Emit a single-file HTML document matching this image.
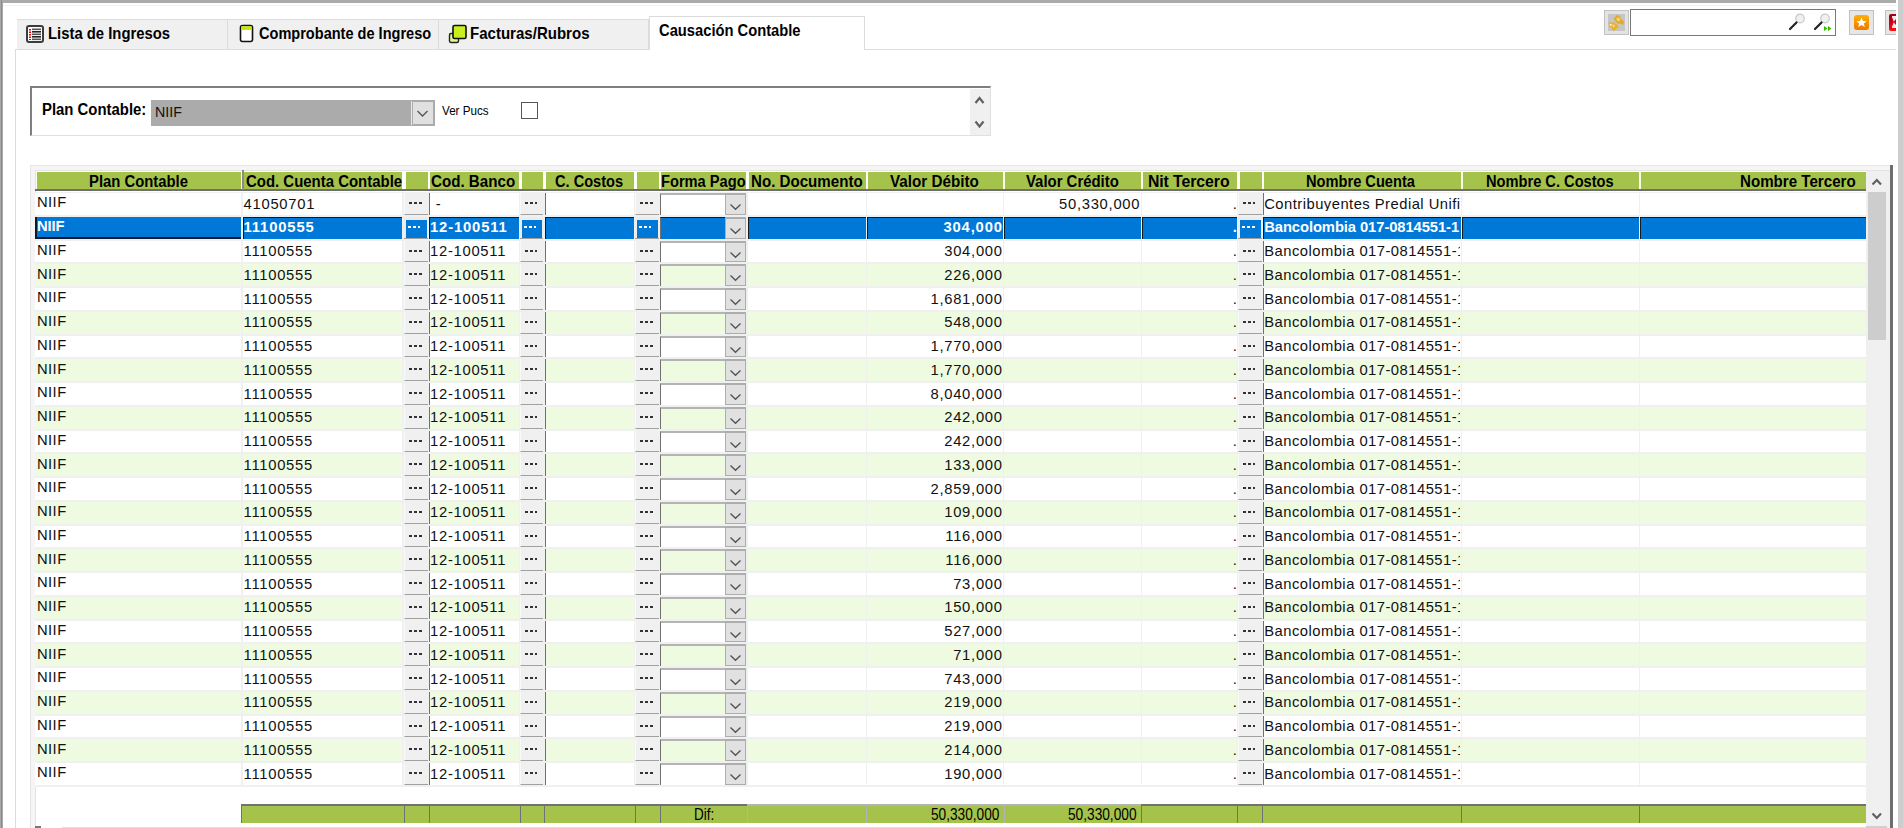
<!DOCTYPE html><html><head><meta charset="utf-8"><style>
html,body{margin:0;padding:0;}
body{width:1903px;height:828px;overflow:hidden;position:relative;background:#fff;font-family:"Liberation Sans", sans-serif;color:#000;}
div{box-sizing:border-box;}
.t{position:absolute;white-space:nowrap;}
.hd{position:absolute;top:172px;height:17px;background:#a5c34b;border-left:1px solid #fafff0;}
.btn{position:absolute;background:#f0f0f0;border-bottom:1px solid #a0a0a0;}
.dots{position:absolute;left:3.7px;top:9px;width:13px;height:2px;background:linear-gradient(90deg,#333 0 2.6px,transparent 2.6px 4.95px,#333 4.95px 7.55px,transparent 7.55px 9.9px,#333 9.9px 12.5px,transparent 12.5px);}
.wd{background:linear-gradient(90deg,#fff 0 2.6px,transparent 2.6px 4.95px,#fff 4.95px 7.55px,transparent 7.55px 9.9px,#fff 9.9px 12.5px,transparent 12.5px);}
</style></head><body>
<div style="position:absolute;left:0px;top:0px;width:1896px;height:3px;background:#ababab;"></div>
<div style="position:absolute;left:0px;top:0px;width:3px;height:828px;background:#a8a8a8;"></div>
<div style="position:absolute;left:1px;top:0px;width:1px;height:828px;background:#8a8a8a;"></div>
<div style="position:absolute;left:1898px;top:0px;width:5px;height:828px;background:#cdcdcd;"></div>
<div style="position:absolute;left:3px;top:5px;width:1893px;height:1px;background:#f3f3f3;"></div>
<div style="position:absolute;left:15px;top:49px;width:1881px;height:1px;background:#dcdcdc;"></div>
<div style="position:absolute;left:15px;top:49px;width:1px;height:779px;background:#dcdcdc;"></div>
<div style="position:absolute;left:17px;top:19px;width:211px;height:30px;background:#f0f0f0;border-top:1px solid #dcdcdc;border-right:1px solid #dcdcdc;"></div>
<div style="position:absolute;left:228px;top:19px;width:211px;height:30px;background:#f0f0f0;border-top:1px solid #dcdcdc;border-right:1px solid #dcdcdc;"></div>
<div style="position:absolute;left:439px;top:19px;width:210px;height:30px;background:#f0f0f0;border-top:1px solid #dcdcdc;border-right:1px solid #dcdcdc;"></div>
<div style="position:absolute;left:649px;top:16px;width:216px;height:34px;background:#fff;border:1px solid #dcdcdc;border-bottom:none;"></div>
<div class="t" style="left:47.56px;top:25.59px;font-size:16.67px;line-height:16.67px;transform:scaleX(0.8908);transform-origin:0 0;font-weight:bold;color:#000;">Lista de Ingresos</div>
<div class="t" style="left:259.42px;top:25.59px;font-size:16.67px;line-height:16.67px;transform:scaleX(0.8732);transform-origin:0 0;font-weight:bold;color:#000;">Comprobante de Ingreso</div>
<div class="t" style="left:469.95px;top:25.59px;font-size:16.67px;line-height:16.67px;transform:scaleX(0.9031);transform-origin:0 0;font-weight:bold;color:#000;">Facturas/Rubros</div>
<div class="t" style="left:658.91px;top:23.31px;font-size:16.52px;line-height:16.52px;transform:scaleX(0.8914);transform-origin:0 0;font-weight:bold;color:#000;">Causación Contable</div>
<svg style="position:absolute;left:26px;top:25px" width="18" height="18" viewBox="0 0 18 18">
<rect x="1" y="1" width="16" height="16" rx="2" fill="#fff" stroke="#3c3c3c" stroke-width="2"/>
<g fill="#e00"><rect x="3" y="4" width="2" height="1.5"/><rect x="3" y="6.5" width="2" height="1.5"/><rect x="3" y="9" width="2" height="1.5"/><rect x="3" y="11.5" width="2" height="1.5"/><rect x="3" y="14" width="2" height="1"/></g>
<g fill="#555"><rect x="6" y="3.5" width="9" height="1.6"/><rect x="6" y="6" width="9" height="1.6" fill="#222"/><rect x="6" y="8.5" width="9" height="1.6"/><rect x="6" y="11" width="9" height="1.6" fill="#222"/><rect x="6" y="13.5" width="9" height="1.6"/></g>
</svg>
<svg style="position:absolute;left:239px;top:24px" width="15" height="19" viewBox="0 0 15 19">
<rect x="1.5" y="1.5" width="12" height="16" rx="2" fill="#fff" stroke="#111" stroke-width="1.6"/>
<rect x="2.3" y="2.3" width="10.4" height="3.6" fill="#c4e800"/>
</svg>
<svg style="position:absolute;left:448px;top:24px" width="20" height="20" viewBox="0 0 20 20">
<rect x="1.5" y="9.5" width="9" height="9" rx="1.5" fill="#e4f59a" stroke="#222" stroke-width="1.4"/>
<rect x="5" y="1.5" width="13" height="13" rx="1.5" fill="#c8f01e" stroke="#111" stroke-width="1.6"/>
</svg>
<div style="position:absolute;left:1604px;top:10px;width:25px;height:25px;background:#e3e3e3;border:1px solid #c2c2c2;"></div>
<div style="position:absolute;left:1608px;top:14px;width:17px;height:17px;background:#c6c6c6;"></div>
<svg style="position:absolute;left:1608px;top:14px" width="17" height="17" viewBox="0 0 17 17">
<path d="M5.7 4.5 L9 1 L12 2.2 L13 5 L15.8 7 L15.5 11 L12 9.5 L10 9.8 L7.5 7.8 Z" fill="#e2aa28"/>
<path d="M0.7 7.5 L3 8.8 L5.5 8.3 L8.5 10.3 L10.8 12.5 L8 15.3 L5.5 17.3 L4 14.8 L1 12 Z" fill="#e6b030"/>
<path d="M8 4.5 L11 3.5 L12.5 6.5 L10 7.5 Z" fill="#f6d870"/>
<path d="M3 10.5 L7 11 L6 14 Z" fill="#f6d870"/>
<circle cx="2.6" cy="10.8" r="1" fill="#fff8d8"/>
</svg>
<div style="position:absolute;left:1630px;top:9px;width:206px;height:27px;background:#fff;border:1.5px solid #787878;"></div>
<svg style="position:absolute;left:1786px;top:13px" width="48" height="20" viewBox="0 0 48 20">
<circle cx="14" cy="5.5" r="4.3" fill="#f0f0f0" stroke="#c8c8c8" stroke-width="1.2"/>
<line x1="4" y1="16" x2="10.5" y2="9.5" stroke="#222" stroke-width="2.2" stroke-linecap="round"/>
<circle cx="39" cy="5.5" r="4.3" fill="#f0f0f0" stroke="#c8c8c8" stroke-width="1.2"/>
<line x1="29" y1="16" x2="35.5" y2="9.5" stroke="#222" stroke-width="2.2" stroke-linecap="round"/>
<path d="M38 13 L41.5 15.5 L38 18 Z M42 13 L45.5 15.5 L42 18 Z" fill="#3cb800"/>
</svg>
<div style="position:absolute;left:1849px;top:10px;width:25px;height:25px;background:#e6e6e6;border:1.5px solid #c0c0c0;"></div>
<svg style="position:absolute;left:1854px;top:15px" width="15" height="15" viewBox="0 0 15 15">
<defs><linearGradient id="og" x1="0" y1="0" x2="0" y2="1"><stop offset="0" stop-color="#ffb000"/><stop offset="1" stop-color="#f07800"/></linearGradient></defs><rect x="0" y="0" width="15" height="15" rx="3" fill="url(#og)"/>
<path d="M7.5 2.5 L9 6 L12.5 6.2 L9.8 8.5 L10.8 12 L7.5 10 L4.2 12 L5.2 8.5 L2.5 6.2 L6 6 Z" fill="#fff"/>
</svg>
<div style="position:absolute;left:1885px;top:10px;width:11px;height:25px;background:#e6e6e6;border:1.5px solid #c0c0c0;border-right:none;"></div>
<div style="position:absolute;left:1889px;top:14px;width:7px;height:17px;background:linear-gradient(180deg,#9a0010 0%,#d0001a 50%,#ff1010 100%);border-radius:2px 0 0 2px;"></div>
<div style="position:absolute;left:1891.5px;top:16px;width:4.5px;height:12px;background:#fff;clip-path:polygon(0 0,100% 0,100% 25%,45% 50%,100% 75%,100% 100%,0 100%,55% 50%);opacity:0.9;"></div>
<div style="position:absolute;left:30px;top:86px;width:961px;height:50px;background:#fff;border-top:2.5px solid #7f7f7f;border-left:2.5px solid #7f7f7f;border-bottom:1px solid #e0e0e0;border-right:1px solid #e0e0e0;"></div>
<div style="position:absolute;left:970px;top:88.5px;width:20px;height:46.5px;background:#f0f0f0;"></div>
<svg style="position:absolute;left:970px;top:89px" width="21" height="46" viewBox="0 0 21 46">
<path d="M5.5 14 L9.5 9 L13.5 14" fill="none" stroke="#606060" stroke-width="2.2"/>
<path d="M5.5 32.5 L9.5 37.5 L13.5 32.5" fill="none" stroke="#606060" stroke-width="2.2"/>
</svg>
<div class="t" style="left:42.16px;top:102.01px;font-size:15.94px;line-height:15.94px;transform:scaleX(0.9349);transform-origin:0 0;font-weight:bold;color:#000;">Plan Contable:</div>
<div style="position:absolute;left:151px;top:100px;width:284px;height:26px;background:#ababab;"></div>
<div class="t" style="left:154.86px;top:104.51px;font-size:14.64px;line-height:14.64px;transform:scaleX(0.9726);transform-origin:0 0;font-weight:normal;color:#111;">NIIF</div>
<div style="position:absolute;left:410px;top:100px;width:25px;height:26px;background:#ababab;"></div>
<div style="position:absolute;left:411px;top:101px;width:1px;height:24px;background:#e8e8e8;"></div>
<div style="position:absolute;left:413px;top:102px;width:20px;height:22px;background:#e0e0e0;"></div>
<svg style="position:absolute;left:413px;top:102px" width="20" height="22" viewBox="0 0 20 22">
<path d="M4.5 9 L9.5 14 L14.5 9" fill="none" stroke="#555" stroke-width="1.3"/>
</svg>
<div class="t" style="left:442.38px;top:105.29px;font-size:12.17px;line-height:12.17px;transform:scaleX(0.9583);transform-origin:0 0;font-weight:normal;color:#000;">Ver Pucs</div>
<div style="position:absolute;left:521px;top:102px;width:17px;height:17px;background:#fff;border:1.5px solid #555;"></div>
<div style="position:absolute;left:30px;top:165px;width:1863px;height:663px;background:#f5f5f5;border-top:1px solid #e6e6e6;border-left:1px solid #e6e6e6;"></div>
<div style="position:absolute;left:1890px;top:165px;width:2.5px;height:663px;background:#6e6e6e;"></div>
<div style="position:absolute;left:1892.5px;top:165px;width:5.5px;height:663px;background:#fff;"></div>
<div style="position:absolute;left:35px;top:170px;width:1855px;height:658px;background:#fff;border-top:1px solid #e4e4e4;border-left:1px solid #e4e4e4;"></div>
<div class="hd" style="left:36px;width:205px;"></div>
<div class="hd" style="left:243px;width:159px;"></div>
<div class="hd" style="left:405px;width:23px;"></div>
<div class="hd" style="left:429px;width:90px;"></div>
<div class="hd" style="left:521px;width:22px;"></div>
<div class="hd" style="left:545px;width:89px;"></div>
<div class="hd" style="left:636px;width:23px;"></div>
<div class="hd" style="left:660px;width:86px;"></div>
<div class="hd" style="left:748px;width:118px;"></div>
<div class="hd" style="left:867px;width:136px;"></div>
<div class="hd" style="left:1004px;width:137px;"></div>
<div class="hd" style="left:1142px;width:95px;"></div>
<div class="hd" style="left:1239px;width:23px;"></div>
<div class="hd" style="left:1263px;width:198px;"></div>
<div class="hd" style="left:1462px;width:177px;"></div>
<div class="hd" style="left:1640px;width:226px;"></div>
<div style="position:absolute;left:35px;top:189px;width:1831px;height:2px;background:#6e6e6e;"></div>
<div style="position:absolute;left:242px;top:170px;width:1.5px;height:20px;background:#8a8a8a;"></div>
<div class="t" style="left:88.76px;top:173.53px;font-size:15.80px;line-height:15.80px;transform:scaleX(0.9399);transform-origin:0 0;font-weight:bold;color:#000;">Plan Contable</div>
<div class="t" style="left:245.50px;top:173.53px;font-size:15.80px;line-height:15.80px;transform:scaleX(0.9462);transform-origin:0 0;font-weight:bold;color:#000;">Cod. Cuenta Contable</div>
<div class="t" style="left:431.39px;top:173.53px;font-size:15.80px;line-height:15.80px;transform:scaleX(0.9588);transform-origin:0 0;font-weight:bold;color:#000;">Cod. Banco</div>
<div class="t" style="left:555.42px;top:173.53px;font-size:15.80px;line-height:15.80px;transform:scaleX(0.9240);transform-origin:0 0;font-weight:bold;color:#000;">C. Costos</div>
<div class="t" style="left:660.98px;top:173.53px;font-size:15.80px;line-height:15.80px;transform:scaleX(0.9267);transform-origin:0 0;font-weight:bold;color:#000;">Forma Pago</div>
<div class="t" style="left:750.94px;top:173.53px;font-size:15.80px;line-height:15.80px;transform:scaleX(0.9565);transform-origin:0 0;font-weight:bold;color:#000;">No. Documento</div>
<div class="t" style="left:889.85px;top:173.53px;font-size:15.80px;line-height:15.80px;transform:scaleX(0.9638);transform-origin:0 0;font-weight:bold;color:#000;">Valor Débito</div>
<div class="t" style="left:1025.85px;top:173.53px;font-size:15.80px;line-height:15.80px;transform:scaleX(0.9439);transform-origin:0 0;font-weight:bold;color:#000;">Valor Crédito</div>
<div class="t" style="left:1147.89px;top:173.53px;font-size:15.80px;line-height:15.80px;letter-spacing:-0.057px;font-weight:bold;color:#000;">Nit Tercero</div>
<div class="t" style="left:1305.98px;top:173.53px;font-size:15.80px;line-height:15.80px;transform:scaleX(0.9264);transform-origin:0 0;font-weight:bold;color:#000;">Nombre Cuenta</div>
<div class="t" style="left:1485.98px;top:173.53px;font-size:15.80px;line-height:15.80px;transform:scaleX(0.9264);transform-origin:0 0;font-weight:bold;color:#000;">Nombre C. Costos</div>
<div class="t" style="left:1739.94px;top:173.53px;font-size:15.80px;line-height:15.80px;transform:scaleX(0.9571);transform-origin:0 0;font-weight:bold;color:#000;">Nombre Tercero</div>
<div style="position:absolute;left:35px;top:191.5px;width:1831px;height:593.75px;background:#f0f0f0;"></div>
<div style="position:absolute;left:35px;top:193px;width:206px;height:22px;background:#fff;"></div>
<div style="position:absolute;left:243px;top:193px;width:159px;height:22px;background:#fff;"></div>
<div class="btn" style="left:404px;top:193px;width:24px;height:22px;border-left:1px solid #fafafa;"><div class="dots"></div></div>
<div style="position:absolute;left:429px;top:193px;width:90px;height:22px;background:#fff;border-left:1px solid #707070;"></div>
<div class="btn" style="left:520px;top:193px;width:23px;height:22px;border-left:1px solid #fafafa;"><div class="dots"></div></div>
<div style="position:absolute;left:545px;top:193px;width:89px;height:22px;background:#fff;border-left:1px solid #707070;"></div>
<div class="btn" style="left:635px;top:193px;width:24px;height:22px;border-left:1px solid #fafafa;"><div class="dots"></div></div>
<div style="position:absolute;left:660px;top:193px;width:86px;height:22px;background:#fff;border-top:2px solid #b4b4b4;border-left:1px solid #707070;"></div>
<div style="position:absolute;left:725px;top:193px;width:21px;height:22px;background:#e1e1e1;border:1px solid #adadad;border-top:2px solid #adadad;"><svg style="position:absolute;left:3px;top:8px" width="13" height="8" viewBox="0 0 13 8"><path d="M1.5 1.5 L6.5 6.3 L11.5 1.5" fill="none" stroke="#555" stroke-width="1.4"/></svg></div>
<div style="position:absolute;left:748px;top:193px;width:118px;height:22px;background:#fff;"></div>
<div style="position:absolute;left:867px;top:193px;width:136px;height:22px;background:#fff;"></div>
<div style="position:absolute;left:1004px;top:193px;width:137px;height:22px;background:#fff;"></div>
<div style="position:absolute;left:1142px;top:193px;width:95px;height:22px;background:#fff;"></div>
<div class="btn" style="left:1238px;top:193px;width:24px;height:22px;border-left:1px solid #fafafa;"><div class="dots"></div></div>
<div style="position:absolute;left:1263px;top:193px;width:198px;height:22px;background:#fff;border-left:1px solid #707070;"></div>
<div style="position:absolute;left:1462px;top:193px;width:177px;height:22px;background:#fff;"></div>
<div style="position:absolute;left:1640px;top:193px;width:226px;height:22px;background:#fff;"></div>
<div class="t" style="top:195.29px;font-size:14.78px;line-height:14.78px;letter-spacing:0.479px;font-weight:normal;color:#111;left:36.90px;">NIIF</div>
<div class="t" style="top:196.59px;font-size:14.78px;line-height:14.78px;letter-spacing:0.729px;font-weight:normal;color:#111;left:243.60px;">41050701</div>
<div class="t" style="top:196.59px;font-size:14.78px;line-height:14.78px;letter-spacing:0.729px;font-weight:normal;color:#111;left:435.70px;">-</div>
<div class="t" style="top:196.59px;font-size:14.78px;line-height:14.78px;letter-spacing:0.729px;font-weight:normal;color:#111;left:939.5px;width:200.73px;text-align:right;">50,330,000</div>
<div class="t" style="top:196.59px;font-size:14.78px;line-height:14.78px;letter-spacing:0.729px;font-weight:normal;color:#111;left:1232.70px;">.</div>
<div class="t" style="top:196.59px;font-size:14.78px;line-height:14.78px;letter-spacing:0.479px;font-weight:normal;color:#111;left:1264.20px;width:196px;overflow:hidden;">Contribuyentes Predial Unificado</div>
<div style="position:absolute;left:35px;top:217px;width:206px;height:22px;background:#0078d7;border-left:2px solid #0a1a2a;border-bottom:2px solid #0a1a2a;"></div>
<div style="position:absolute;left:243px;top:217px;width:159px;height:22px;background:#0078d7;border-left:1px solid #1a1a1a;border-top:1.5px solid #1a1a1a;"></div>
<div class="btn" style="left:404px;top:217px;width:24px;height:22px;background:#ececec;"><div style="position:absolute;left:1.5px;top:2.5px;right:1px;bottom:0.5px;background:#0078d7;"></div><div class="dots wd"></div></div>
<div style="position:absolute;left:429px;top:217px;width:90px;height:22px;background:#0078d7;border-left:1px solid #1a1a1a;border-top:1.5px solid #1a1a1a;"></div>
<div class="btn" style="left:520px;top:217px;width:23px;height:22px;background:#ececec;"><div style="position:absolute;left:1.5px;top:2.5px;right:1px;bottom:0.5px;background:#0078d7;"></div><div class="dots wd"></div></div>
<div style="position:absolute;left:545px;top:217px;width:89px;height:22px;background:#0078d7;border-left:1px solid #1a1a1a;border-top:1.5px solid #1a1a1a;"></div>
<div class="btn" style="left:635px;top:217px;width:24px;height:22px;background:#ececec;"><div style="position:absolute;left:1.5px;top:2.5px;right:1px;bottom:0.5px;background:#0078d7;"></div><div class="dots wd"></div></div>
<div style="position:absolute;left:660px;top:217px;width:86px;height:22px;background:#0078d7;border-top:1.5px solid #1a1a1a;border-left:1px solid #707070;"></div>
<div style="position:absolute;left:725px;top:217px;width:21px;height:22px;background:#e1e1e1;border:1px solid #adadad;border-top:2px solid #adadad;"><svg style="position:absolute;left:3px;top:8px" width="13" height="8" viewBox="0 0 13 8"><path d="M1.5 1.5 L6.5 6.3 L11.5 1.5" fill="none" stroke="#555" stroke-width="1.4"/></svg></div>
<div style="position:absolute;left:748px;top:217px;width:118px;height:22px;background:#0078d7;border-left:1px solid #1a1a1a;border-top:1.5px solid #1a1a1a;"></div>
<div style="position:absolute;left:867px;top:217px;width:136px;height:22px;background:#0078d7;border-left:1px solid #1a1a1a;border-top:1.5px solid #1a1a1a;"></div>
<div style="position:absolute;left:1004px;top:217px;width:137px;height:22px;background:#0078d7;border-left:1px solid #1a1a1a;border-top:1.5px solid #1a1a1a;"></div>
<div style="position:absolute;left:1142px;top:217px;width:95px;height:22px;background:#0078d7;border-left:1px solid #1a1a1a;border-top:1.5px solid #1a1a1a;"></div>
<div class="btn" style="left:1238px;top:217px;width:24px;height:22px;background:#ececec;"><div style="position:absolute;left:1.5px;top:2.5px;right:1px;bottom:0.5px;background:#0078d7;"></div><div class="dots wd"></div></div>
<div style="position:absolute;left:1263px;top:217px;width:198px;height:22px;background:#0078d7;border-left:1px solid #1a1a1a;border-top:1.5px solid #1a1a1a;"></div>
<div style="position:absolute;left:1462px;top:217px;width:177px;height:22px;background:#0078d7;border-left:1px solid #1a1a1a;border-top:1.5px solid #1a1a1a;"></div>
<div style="position:absolute;left:1640px;top:217px;width:226px;height:22px;background:#0078d7;border-left:1px solid #1a1a1a;border-top:1.5px solid #1a1a1a;"></div>
<div class="t" style="top:219.04px;font-size:14.78px;line-height:14.78px;letter-spacing:-0.084px;font-weight:bold;color:#fff;left:36.90px;">NIIF</div>
<div class="t" style="top:220.34px;font-size:14.78px;line-height:14.78px;letter-spacing:0.868px;font-weight:bold;color:#fff;left:243.60px;">11100555</div>
<div class="t" style="top:220.34px;font-size:14.78px;line-height:14.78px;letter-spacing:0.868px;font-weight:bold;color:#fff;left:430.00px;">12-100511</div>
<div class="t" style="top:220.34px;font-size:14.78px;line-height:14.78px;letter-spacing:0.868px;font-weight:bold;color:#fff;left:802px;width:200.87px;text-align:right;">304,000</div>
<div class="t" style="top:220.34px;font-size:14.78px;line-height:14.78px;letter-spacing:0.868px;font-weight:bold;color:#fff;left:1232.70px;">.</div>
<div class="t" style="top:220.34px;font-size:14.78px;line-height:14.78px;letter-spacing:-0.084px;font-weight:bold;color:#fff;left:1264.20px;width:196px;overflow:hidden;">Bancolombia 017-0814551-1</div>
<div style="position:absolute;left:35px;top:241px;width:206px;height:21px;background:#fff;"></div>
<div style="position:absolute;left:243px;top:241px;width:159px;height:21px;background:#fff;"></div>
<div class="btn" style="left:404px;top:241px;width:24px;height:21px;border-left:1px solid #fafafa;"><div class="dots"></div></div>
<div style="position:absolute;left:429px;top:241px;width:90px;height:21px;background:#fff;border-left:1px solid #707070;"></div>
<div class="btn" style="left:520px;top:241px;width:23px;height:21px;border-left:1px solid #fafafa;"><div class="dots"></div></div>
<div style="position:absolute;left:545px;top:241px;width:89px;height:21px;background:#fff;border-left:1px solid #707070;"></div>
<div class="btn" style="left:635px;top:241px;width:24px;height:21px;border-left:1px solid #fafafa;"><div class="dots"></div></div>
<div style="position:absolute;left:660px;top:241px;width:86px;height:21px;background:#fff;border-top:2px solid #b4b4b4;border-left:1px solid #707070;"></div>
<div style="position:absolute;left:725px;top:241px;width:21px;height:21px;background:#e1e1e1;border:1px solid #adadad;border-top:2px solid #adadad;"><svg style="position:absolute;left:3px;top:8px" width="13" height="8" viewBox="0 0 13 8"><path d="M1.5 1.5 L6.5 6.3 L11.5 1.5" fill="none" stroke="#555" stroke-width="1.4"/></svg></div>
<div style="position:absolute;left:748px;top:241px;width:118px;height:21px;background:#fff;"></div>
<div style="position:absolute;left:867px;top:241px;width:136px;height:21px;background:#fff;"></div>
<div style="position:absolute;left:1004px;top:241px;width:137px;height:21px;background:#fff;"></div>
<div style="position:absolute;left:1142px;top:241px;width:95px;height:21px;background:#fff;"></div>
<div class="btn" style="left:1238px;top:241px;width:24px;height:21px;border-left:1px solid #fafafa;"><div class="dots"></div></div>
<div style="position:absolute;left:1263px;top:241px;width:198px;height:21px;background:#fff;border-left:1px solid #707070;"></div>
<div style="position:absolute;left:1462px;top:241px;width:177px;height:21px;background:#fff;"></div>
<div style="position:absolute;left:1640px;top:241px;width:226px;height:21px;background:#fff;"></div>
<div class="t" style="top:242.79px;font-size:14.78px;line-height:14.78px;letter-spacing:0.479px;font-weight:normal;color:#111;left:36.90px;">NIIF</div>
<div class="t" style="top:244.09px;font-size:14.78px;line-height:14.78px;letter-spacing:0.729px;font-weight:normal;color:#111;left:243.60px;">11100555</div>
<div class="t" style="top:244.09px;font-size:14.78px;line-height:14.78px;letter-spacing:0.729px;font-weight:normal;color:#111;left:430.00px;">12-100511</div>
<div class="t" style="top:244.09px;font-size:14.78px;line-height:14.78px;letter-spacing:0.729px;font-weight:normal;color:#111;left:802px;width:200.73px;text-align:right;">304,000</div>
<div class="t" style="top:244.09px;font-size:14.78px;line-height:14.78px;letter-spacing:0.729px;font-weight:normal;color:#111;left:1232.70px;">.</div>
<div class="t" style="top:244.09px;font-size:14.78px;line-height:14.78px;letter-spacing:0.479px;font-weight:normal;color:#111;left:1264.20px;width:196px;overflow:hidden;">Bancolombia 017-0814551-1</div>
<div style="position:absolute;left:35px;top:264px;width:206px;height:22px;background:#effbe1;"></div>
<div style="position:absolute;left:243px;top:264px;width:159px;height:22px;background:#effbe1;"></div>
<div class="btn" style="left:404px;top:264px;width:24px;height:22px;border-left:1px solid #fafafa;"><div class="dots"></div></div>
<div style="position:absolute;left:429px;top:264px;width:90px;height:22px;background:#effbe1;border-left:1px solid #707070;"></div>
<div class="btn" style="left:520px;top:264px;width:23px;height:22px;border-left:1px solid #fafafa;"><div class="dots"></div></div>
<div style="position:absolute;left:545px;top:264px;width:89px;height:22px;background:#effbe1;border-left:1px solid #707070;"></div>
<div class="btn" style="left:635px;top:264px;width:24px;height:22px;border-left:1px solid #fafafa;"><div class="dots"></div></div>
<div style="position:absolute;left:660px;top:264px;width:86px;height:22px;background:#effbe1;border-top:2px solid #b4b4b4;border-left:1px solid #707070;"></div>
<div style="position:absolute;left:725px;top:264px;width:21px;height:22px;background:#e1e1e1;border:1px solid #adadad;border-top:2px solid #adadad;"><svg style="position:absolute;left:3px;top:8px" width="13" height="8" viewBox="0 0 13 8"><path d="M1.5 1.5 L6.5 6.3 L11.5 1.5" fill="none" stroke="#555" stroke-width="1.4"/></svg></div>
<div style="position:absolute;left:748px;top:264px;width:118px;height:22px;background:#effbe1;"></div>
<div style="position:absolute;left:867px;top:264px;width:136px;height:22px;background:#effbe1;"></div>
<div style="position:absolute;left:1004px;top:264px;width:137px;height:22px;background:#effbe1;"></div>
<div style="position:absolute;left:1142px;top:264px;width:95px;height:22px;background:#effbe1;"></div>
<div class="btn" style="left:1238px;top:264px;width:24px;height:22px;border-left:1px solid #fafafa;"><div class="dots"></div></div>
<div style="position:absolute;left:1263px;top:264px;width:198px;height:22px;background:#effbe1;border-left:1px solid #707070;"></div>
<div style="position:absolute;left:1462px;top:264px;width:177px;height:22px;background:#effbe1;"></div>
<div style="position:absolute;left:1640px;top:264px;width:226px;height:22px;background:#effbe1;"></div>
<div class="t" style="top:266.54px;font-size:14.78px;line-height:14.78px;letter-spacing:0.479px;font-weight:normal;color:#111;left:36.90px;">NIIF</div>
<div class="t" style="top:267.84px;font-size:14.78px;line-height:14.78px;letter-spacing:0.729px;font-weight:normal;color:#111;left:243.60px;">11100555</div>
<div class="t" style="top:267.84px;font-size:14.78px;line-height:14.78px;letter-spacing:0.729px;font-weight:normal;color:#111;left:430.00px;">12-100511</div>
<div class="t" style="top:267.84px;font-size:14.78px;line-height:14.78px;letter-spacing:0.729px;font-weight:normal;color:#111;left:802px;width:200.73px;text-align:right;">226,000</div>
<div class="t" style="top:267.84px;font-size:14.78px;line-height:14.78px;letter-spacing:0.729px;font-weight:normal;color:#111;left:1232.70px;">.</div>
<div class="t" style="top:267.84px;font-size:14.78px;line-height:14.78px;letter-spacing:0.479px;font-weight:normal;color:#111;left:1264.20px;width:196px;overflow:hidden;">Bancolombia 017-0814551-1</div>
<div style="position:absolute;left:35px;top:288px;width:206px;height:22px;background:#fff;"></div>
<div style="position:absolute;left:243px;top:288px;width:159px;height:22px;background:#fff;"></div>
<div class="btn" style="left:404px;top:288px;width:24px;height:22px;border-left:1px solid #fafafa;"><div class="dots"></div></div>
<div style="position:absolute;left:429px;top:288px;width:90px;height:22px;background:#fff;border-left:1px solid #707070;"></div>
<div class="btn" style="left:520px;top:288px;width:23px;height:22px;border-left:1px solid #fafafa;"><div class="dots"></div></div>
<div style="position:absolute;left:545px;top:288px;width:89px;height:22px;background:#fff;border-left:1px solid #707070;"></div>
<div class="btn" style="left:635px;top:288px;width:24px;height:22px;border-left:1px solid #fafafa;"><div class="dots"></div></div>
<div style="position:absolute;left:660px;top:288px;width:86px;height:22px;background:#fff;border-top:2px solid #b4b4b4;border-left:1px solid #707070;"></div>
<div style="position:absolute;left:725px;top:288px;width:21px;height:22px;background:#e1e1e1;border:1px solid #adadad;border-top:2px solid #adadad;"><svg style="position:absolute;left:3px;top:8px" width="13" height="8" viewBox="0 0 13 8"><path d="M1.5 1.5 L6.5 6.3 L11.5 1.5" fill="none" stroke="#555" stroke-width="1.4"/></svg></div>
<div style="position:absolute;left:748px;top:288px;width:118px;height:22px;background:#fff;"></div>
<div style="position:absolute;left:867px;top:288px;width:136px;height:22px;background:#fff;"></div>
<div style="position:absolute;left:1004px;top:288px;width:137px;height:22px;background:#fff;"></div>
<div style="position:absolute;left:1142px;top:288px;width:95px;height:22px;background:#fff;"></div>
<div class="btn" style="left:1238px;top:288px;width:24px;height:22px;border-left:1px solid #fafafa;"><div class="dots"></div></div>
<div style="position:absolute;left:1263px;top:288px;width:198px;height:22px;background:#fff;border-left:1px solid #707070;"></div>
<div style="position:absolute;left:1462px;top:288px;width:177px;height:22px;background:#fff;"></div>
<div style="position:absolute;left:1640px;top:288px;width:226px;height:22px;background:#fff;"></div>
<div class="t" style="top:290.29px;font-size:14.78px;line-height:14.78px;letter-spacing:0.479px;font-weight:normal;color:#111;left:36.90px;">NIIF</div>
<div class="t" style="top:291.59px;font-size:14.78px;line-height:14.78px;letter-spacing:0.729px;font-weight:normal;color:#111;left:243.60px;">11100555</div>
<div class="t" style="top:291.59px;font-size:14.78px;line-height:14.78px;letter-spacing:0.729px;font-weight:normal;color:#111;left:430.00px;">12-100511</div>
<div class="t" style="top:291.59px;font-size:14.78px;line-height:14.78px;letter-spacing:0.729px;font-weight:normal;color:#111;left:802px;width:200.73px;text-align:right;">1,681,000</div>
<div class="t" style="top:291.59px;font-size:14.78px;line-height:14.78px;letter-spacing:0.729px;font-weight:normal;color:#111;left:1232.70px;">.</div>
<div class="t" style="top:291.59px;font-size:14.78px;line-height:14.78px;letter-spacing:0.479px;font-weight:normal;color:#111;left:1264.20px;width:196px;overflow:hidden;">Bancolombia 017-0814551-1</div>
<div style="position:absolute;left:35px;top:312px;width:206px;height:22px;background:#effbe1;"></div>
<div style="position:absolute;left:243px;top:312px;width:159px;height:22px;background:#effbe1;"></div>
<div class="btn" style="left:404px;top:312px;width:24px;height:22px;border-left:1px solid #fafafa;"><div class="dots"></div></div>
<div style="position:absolute;left:429px;top:312px;width:90px;height:22px;background:#effbe1;border-left:1px solid #707070;"></div>
<div class="btn" style="left:520px;top:312px;width:23px;height:22px;border-left:1px solid #fafafa;"><div class="dots"></div></div>
<div style="position:absolute;left:545px;top:312px;width:89px;height:22px;background:#effbe1;border-left:1px solid #707070;"></div>
<div class="btn" style="left:635px;top:312px;width:24px;height:22px;border-left:1px solid #fafafa;"><div class="dots"></div></div>
<div style="position:absolute;left:660px;top:312px;width:86px;height:22px;background:#effbe1;border-top:2px solid #b4b4b4;border-left:1px solid #707070;"></div>
<div style="position:absolute;left:725px;top:312px;width:21px;height:22px;background:#e1e1e1;border:1px solid #adadad;border-top:2px solid #adadad;"><svg style="position:absolute;left:3px;top:8px" width="13" height="8" viewBox="0 0 13 8"><path d="M1.5 1.5 L6.5 6.3 L11.5 1.5" fill="none" stroke="#555" stroke-width="1.4"/></svg></div>
<div style="position:absolute;left:748px;top:312px;width:118px;height:22px;background:#effbe1;"></div>
<div style="position:absolute;left:867px;top:312px;width:136px;height:22px;background:#effbe1;"></div>
<div style="position:absolute;left:1004px;top:312px;width:137px;height:22px;background:#effbe1;"></div>
<div style="position:absolute;left:1142px;top:312px;width:95px;height:22px;background:#effbe1;"></div>
<div class="btn" style="left:1238px;top:312px;width:24px;height:22px;border-left:1px solid #fafafa;"><div class="dots"></div></div>
<div style="position:absolute;left:1263px;top:312px;width:198px;height:22px;background:#effbe1;border-left:1px solid #707070;"></div>
<div style="position:absolute;left:1462px;top:312px;width:177px;height:22px;background:#effbe1;"></div>
<div style="position:absolute;left:1640px;top:312px;width:226px;height:22px;background:#effbe1;"></div>
<div class="t" style="top:314.04px;font-size:14.78px;line-height:14.78px;letter-spacing:0.479px;font-weight:normal;color:#111;left:36.90px;">NIIF</div>
<div class="t" style="top:315.34px;font-size:14.78px;line-height:14.78px;letter-spacing:0.729px;font-weight:normal;color:#111;left:243.60px;">11100555</div>
<div class="t" style="top:315.34px;font-size:14.78px;line-height:14.78px;letter-spacing:0.729px;font-weight:normal;color:#111;left:430.00px;">12-100511</div>
<div class="t" style="top:315.34px;font-size:14.78px;line-height:14.78px;letter-spacing:0.729px;font-weight:normal;color:#111;left:802px;width:200.73px;text-align:right;">548,000</div>
<div class="t" style="top:315.34px;font-size:14.78px;line-height:14.78px;letter-spacing:0.729px;font-weight:normal;color:#111;left:1232.70px;">.</div>
<div class="t" style="top:315.34px;font-size:14.78px;line-height:14.78px;letter-spacing:0.479px;font-weight:normal;color:#111;left:1264.20px;width:196px;overflow:hidden;">Bancolombia 017-0814551-1</div>
<div style="position:absolute;left:35px;top:336px;width:206px;height:21px;background:#fff;"></div>
<div style="position:absolute;left:243px;top:336px;width:159px;height:21px;background:#fff;"></div>
<div class="btn" style="left:404px;top:336px;width:24px;height:21px;border-left:1px solid #fafafa;"><div class="dots"></div></div>
<div style="position:absolute;left:429px;top:336px;width:90px;height:21px;background:#fff;border-left:1px solid #707070;"></div>
<div class="btn" style="left:520px;top:336px;width:23px;height:21px;border-left:1px solid #fafafa;"><div class="dots"></div></div>
<div style="position:absolute;left:545px;top:336px;width:89px;height:21px;background:#fff;border-left:1px solid #707070;"></div>
<div class="btn" style="left:635px;top:336px;width:24px;height:21px;border-left:1px solid #fafafa;"><div class="dots"></div></div>
<div style="position:absolute;left:660px;top:336px;width:86px;height:21px;background:#fff;border-top:2px solid #b4b4b4;border-left:1px solid #707070;"></div>
<div style="position:absolute;left:725px;top:336px;width:21px;height:21px;background:#e1e1e1;border:1px solid #adadad;border-top:2px solid #adadad;"><svg style="position:absolute;left:3px;top:8px" width="13" height="8" viewBox="0 0 13 8"><path d="M1.5 1.5 L6.5 6.3 L11.5 1.5" fill="none" stroke="#555" stroke-width="1.4"/></svg></div>
<div style="position:absolute;left:748px;top:336px;width:118px;height:21px;background:#fff;"></div>
<div style="position:absolute;left:867px;top:336px;width:136px;height:21px;background:#fff;"></div>
<div style="position:absolute;left:1004px;top:336px;width:137px;height:21px;background:#fff;"></div>
<div style="position:absolute;left:1142px;top:336px;width:95px;height:21px;background:#fff;"></div>
<div class="btn" style="left:1238px;top:336px;width:24px;height:21px;border-left:1px solid #fafafa;"><div class="dots"></div></div>
<div style="position:absolute;left:1263px;top:336px;width:198px;height:21px;background:#fff;border-left:1px solid #707070;"></div>
<div style="position:absolute;left:1462px;top:336px;width:177px;height:21px;background:#fff;"></div>
<div style="position:absolute;left:1640px;top:336px;width:226px;height:21px;background:#fff;"></div>
<div class="t" style="top:337.79px;font-size:14.78px;line-height:14.78px;letter-spacing:0.479px;font-weight:normal;color:#111;left:36.90px;">NIIF</div>
<div class="t" style="top:339.09px;font-size:14.78px;line-height:14.78px;letter-spacing:0.729px;font-weight:normal;color:#111;left:243.60px;">11100555</div>
<div class="t" style="top:339.09px;font-size:14.78px;line-height:14.78px;letter-spacing:0.729px;font-weight:normal;color:#111;left:430.00px;">12-100511</div>
<div class="t" style="top:339.09px;font-size:14.78px;line-height:14.78px;letter-spacing:0.729px;font-weight:normal;color:#111;left:802px;width:200.73px;text-align:right;">1,770,000</div>
<div class="t" style="top:339.09px;font-size:14.78px;line-height:14.78px;letter-spacing:0.729px;font-weight:normal;color:#111;left:1232.70px;">.</div>
<div class="t" style="top:339.09px;font-size:14.78px;line-height:14.78px;letter-spacing:0.479px;font-weight:normal;color:#111;left:1264.20px;width:196px;overflow:hidden;">Bancolombia 017-0814551-1</div>
<div style="position:absolute;left:35px;top:359px;width:206px;height:22px;background:#effbe1;"></div>
<div style="position:absolute;left:243px;top:359px;width:159px;height:22px;background:#effbe1;"></div>
<div class="btn" style="left:404px;top:359px;width:24px;height:22px;border-left:1px solid #fafafa;"><div class="dots"></div></div>
<div style="position:absolute;left:429px;top:359px;width:90px;height:22px;background:#effbe1;border-left:1px solid #707070;"></div>
<div class="btn" style="left:520px;top:359px;width:23px;height:22px;border-left:1px solid #fafafa;"><div class="dots"></div></div>
<div style="position:absolute;left:545px;top:359px;width:89px;height:22px;background:#effbe1;border-left:1px solid #707070;"></div>
<div class="btn" style="left:635px;top:359px;width:24px;height:22px;border-left:1px solid #fafafa;"><div class="dots"></div></div>
<div style="position:absolute;left:660px;top:359px;width:86px;height:22px;background:#effbe1;border-top:2px solid #b4b4b4;border-left:1px solid #707070;"></div>
<div style="position:absolute;left:725px;top:359px;width:21px;height:22px;background:#e1e1e1;border:1px solid #adadad;border-top:2px solid #adadad;"><svg style="position:absolute;left:3px;top:8px" width="13" height="8" viewBox="0 0 13 8"><path d="M1.5 1.5 L6.5 6.3 L11.5 1.5" fill="none" stroke="#555" stroke-width="1.4"/></svg></div>
<div style="position:absolute;left:748px;top:359px;width:118px;height:22px;background:#effbe1;"></div>
<div style="position:absolute;left:867px;top:359px;width:136px;height:22px;background:#effbe1;"></div>
<div style="position:absolute;left:1004px;top:359px;width:137px;height:22px;background:#effbe1;"></div>
<div style="position:absolute;left:1142px;top:359px;width:95px;height:22px;background:#effbe1;"></div>
<div class="btn" style="left:1238px;top:359px;width:24px;height:22px;border-left:1px solid #fafafa;"><div class="dots"></div></div>
<div style="position:absolute;left:1263px;top:359px;width:198px;height:22px;background:#effbe1;border-left:1px solid #707070;"></div>
<div style="position:absolute;left:1462px;top:359px;width:177px;height:22px;background:#effbe1;"></div>
<div style="position:absolute;left:1640px;top:359px;width:226px;height:22px;background:#effbe1;"></div>
<div class="t" style="top:361.54px;font-size:14.78px;line-height:14.78px;letter-spacing:0.479px;font-weight:normal;color:#111;left:36.90px;">NIIF</div>
<div class="t" style="top:362.84px;font-size:14.78px;line-height:14.78px;letter-spacing:0.729px;font-weight:normal;color:#111;left:243.60px;">11100555</div>
<div class="t" style="top:362.84px;font-size:14.78px;line-height:14.78px;letter-spacing:0.729px;font-weight:normal;color:#111;left:430.00px;">12-100511</div>
<div class="t" style="top:362.84px;font-size:14.78px;line-height:14.78px;letter-spacing:0.729px;font-weight:normal;color:#111;left:802px;width:200.73px;text-align:right;">1,770,000</div>
<div class="t" style="top:362.84px;font-size:14.78px;line-height:14.78px;letter-spacing:0.729px;font-weight:normal;color:#111;left:1232.70px;">.</div>
<div class="t" style="top:362.84px;font-size:14.78px;line-height:14.78px;letter-spacing:0.479px;font-weight:normal;color:#111;left:1264.20px;width:196px;overflow:hidden;">Bancolombia 017-0814551-1</div>
<div style="position:absolute;left:35px;top:383px;width:206px;height:22px;background:#fff;"></div>
<div style="position:absolute;left:243px;top:383px;width:159px;height:22px;background:#fff;"></div>
<div class="btn" style="left:404px;top:383px;width:24px;height:22px;border-left:1px solid #fafafa;"><div class="dots"></div></div>
<div style="position:absolute;left:429px;top:383px;width:90px;height:22px;background:#fff;border-left:1px solid #707070;"></div>
<div class="btn" style="left:520px;top:383px;width:23px;height:22px;border-left:1px solid #fafafa;"><div class="dots"></div></div>
<div style="position:absolute;left:545px;top:383px;width:89px;height:22px;background:#fff;border-left:1px solid #707070;"></div>
<div class="btn" style="left:635px;top:383px;width:24px;height:22px;border-left:1px solid #fafafa;"><div class="dots"></div></div>
<div style="position:absolute;left:660px;top:383px;width:86px;height:22px;background:#fff;border-top:2px solid #b4b4b4;border-left:1px solid #707070;"></div>
<div style="position:absolute;left:725px;top:383px;width:21px;height:22px;background:#e1e1e1;border:1px solid #adadad;border-top:2px solid #adadad;"><svg style="position:absolute;left:3px;top:8px" width="13" height="8" viewBox="0 0 13 8"><path d="M1.5 1.5 L6.5 6.3 L11.5 1.5" fill="none" stroke="#555" stroke-width="1.4"/></svg></div>
<div style="position:absolute;left:748px;top:383px;width:118px;height:22px;background:#fff;"></div>
<div style="position:absolute;left:867px;top:383px;width:136px;height:22px;background:#fff;"></div>
<div style="position:absolute;left:1004px;top:383px;width:137px;height:22px;background:#fff;"></div>
<div style="position:absolute;left:1142px;top:383px;width:95px;height:22px;background:#fff;"></div>
<div class="btn" style="left:1238px;top:383px;width:24px;height:22px;border-left:1px solid #fafafa;"><div class="dots"></div></div>
<div style="position:absolute;left:1263px;top:383px;width:198px;height:22px;background:#fff;border-left:1px solid #707070;"></div>
<div style="position:absolute;left:1462px;top:383px;width:177px;height:22px;background:#fff;"></div>
<div style="position:absolute;left:1640px;top:383px;width:226px;height:22px;background:#fff;"></div>
<div class="t" style="top:385.29px;font-size:14.78px;line-height:14.78px;letter-spacing:0.479px;font-weight:normal;color:#111;left:36.90px;">NIIF</div>
<div class="t" style="top:386.59px;font-size:14.78px;line-height:14.78px;letter-spacing:0.729px;font-weight:normal;color:#111;left:243.60px;">11100555</div>
<div class="t" style="top:386.59px;font-size:14.78px;line-height:14.78px;letter-spacing:0.729px;font-weight:normal;color:#111;left:430.00px;">12-100511</div>
<div class="t" style="top:386.59px;font-size:14.78px;line-height:14.78px;letter-spacing:0.729px;font-weight:normal;color:#111;left:802px;width:200.73px;text-align:right;">8,040,000</div>
<div class="t" style="top:386.59px;font-size:14.78px;line-height:14.78px;letter-spacing:0.729px;font-weight:normal;color:#111;left:1232.70px;">.</div>
<div class="t" style="top:386.59px;font-size:14.78px;line-height:14.78px;letter-spacing:0.479px;font-weight:normal;color:#111;left:1264.20px;width:196px;overflow:hidden;">Bancolombia 017-0814551-1</div>
<div style="position:absolute;left:35px;top:407px;width:206px;height:22px;background:#effbe1;"></div>
<div style="position:absolute;left:243px;top:407px;width:159px;height:22px;background:#effbe1;"></div>
<div class="btn" style="left:404px;top:407px;width:24px;height:22px;border-left:1px solid #fafafa;"><div class="dots"></div></div>
<div style="position:absolute;left:429px;top:407px;width:90px;height:22px;background:#effbe1;border-left:1px solid #707070;"></div>
<div class="btn" style="left:520px;top:407px;width:23px;height:22px;border-left:1px solid #fafafa;"><div class="dots"></div></div>
<div style="position:absolute;left:545px;top:407px;width:89px;height:22px;background:#effbe1;border-left:1px solid #707070;"></div>
<div class="btn" style="left:635px;top:407px;width:24px;height:22px;border-left:1px solid #fafafa;"><div class="dots"></div></div>
<div style="position:absolute;left:660px;top:407px;width:86px;height:22px;background:#effbe1;border-top:2px solid #b4b4b4;border-left:1px solid #707070;"></div>
<div style="position:absolute;left:725px;top:407px;width:21px;height:22px;background:#e1e1e1;border:1px solid #adadad;border-top:2px solid #adadad;"><svg style="position:absolute;left:3px;top:8px" width="13" height="8" viewBox="0 0 13 8"><path d="M1.5 1.5 L6.5 6.3 L11.5 1.5" fill="none" stroke="#555" stroke-width="1.4"/></svg></div>
<div style="position:absolute;left:748px;top:407px;width:118px;height:22px;background:#effbe1;"></div>
<div style="position:absolute;left:867px;top:407px;width:136px;height:22px;background:#effbe1;"></div>
<div style="position:absolute;left:1004px;top:407px;width:137px;height:22px;background:#effbe1;"></div>
<div style="position:absolute;left:1142px;top:407px;width:95px;height:22px;background:#effbe1;"></div>
<div class="btn" style="left:1238px;top:407px;width:24px;height:22px;border-left:1px solid #fafafa;"><div class="dots"></div></div>
<div style="position:absolute;left:1263px;top:407px;width:198px;height:22px;background:#effbe1;border-left:1px solid #707070;"></div>
<div style="position:absolute;left:1462px;top:407px;width:177px;height:22px;background:#effbe1;"></div>
<div style="position:absolute;left:1640px;top:407px;width:226px;height:22px;background:#effbe1;"></div>
<div class="t" style="top:409.04px;font-size:14.78px;line-height:14.78px;letter-spacing:0.479px;font-weight:normal;color:#111;left:36.90px;">NIIF</div>
<div class="t" style="top:410.34px;font-size:14.78px;line-height:14.78px;letter-spacing:0.729px;font-weight:normal;color:#111;left:243.60px;">11100555</div>
<div class="t" style="top:410.34px;font-size:14.78px;line-height:14.78px;letter-spacing:0.729px;font-weight:normal;color:#111;left:430.00px;">12-100511</div>
<div class="t" style="top:410.34px;font-size:14.78px;line-height:14.78px;letter-spacing:0.729px;font-weight:normal;color:#111;left:802px;width:200.73px;text-align:right;">242,000</div>
<div class="t" style="top:410.34px;font-size:14.78px;line-height:14.78px;letter-spacing:0.729px;font-weight:normal;color:#111;left:1232.70px;">.</div>
<div class="t" style="top:410.34px;font-size:14.78px;line-height:14.78px;letter-spacing:0.479px;font-weight:normal;color:#111;left:1264.20px;width:196px;overflow:hidden;">Bancolombia 017-0814551-1</div>
<div style="position:absolute;left:35px;top:431px;width:206px;height:21px;background:#fff;"></div>
<div style="position:absolute;left:243px;top:431px;width:159px;height:21px;background:#fff;"></div>
<div class="btn" style="left:404px;top:431px;width:24px;height:21px;border-left:1px solid #fafafa;"><div class="dots"></div></div>
<div style="position:absolute;left:429px;top:431px;width:90px;height:21px;background:#fff;border-left:1px solid #707070;"></div>
<div class="btn" style="left:520px;top:431px;width:23px;height:21px;border-left:1px solid #fafafa;"><div class="dots"></div></div>
<div style="position:absolute;left:545px;top:431px;width:89px;height:21px;background:#fff;border-left:1px solid #707070;"></div>
<div class="btn" style="left:635px;top:431px;width:24px;height:21px;border-left:1px solid #fafafa;"><div class="dots"></div></div>
<div style="position:absolute;left:660px;top:431px;width:86px;height:21px;background:#fff;border-top:2px solid #b4b4b4;border-left:1px solid #707070;"></div>
<div style="position:absolute;left:725px;top:431px;width:21px;height:21px;background:#e1e1e1;border:1px solid #adadad;border-top:2px solid #adadad;"><svg style="position:absolute;left:3px;top:8px" width="13" height="8" viewBox="0 0 13 8"><path d="M1.5 1.5 L6.5 6.3 L11.5 1.5" fill="none" stroke="#555" stroke-width="1.4"/></svg></div>
<div style="position:absolute;left:748px;top:431px;width:118px;height:21px;background:#fff;"></div>
<div style="position:absolute;left:867px;top:431px;width:136px;height:21px;background:#fff;"></div>
<div style="position:absolute;left:1004px;top:431px;width:137px;height:21px;background:#fff;"></div>
<div style="position:absolute;left:1142px;top:431px;width:95px;height:21px;background:#fff;"></div>
<div class="btn" style="left:1238px;top:431px;width:24px;height:21px;border-left:1px solid #fafafa;"><div class="dots"></div></div>
<div style="position:absolute;left:1263px;top:431px;width:198px;height:21px;background:#fff;border-left:1px solid #707070;"></div>
<div style="position:absolute;left:1462px;top:431px;width:177px;height:21px;background:#fff;"></div>
<div style="position:absolute;left:1640px;top:431px;width:226px;height:21px;background:#fff;"></div>
<div class="t" style="top:432.79px;font-size:14.78px;line-height:14.78px;letter-spacing:0.479px;font-weight:normal;color:#111;left:36.90px;">NIIF</div>
<div class="t" style="top:434.09px;font-size:14.78px;line-height:14.78px;letter-spacing:0.729px;font-weight:normal;color:#111;left:243.60px;">11100555</div>
<div class="t" style="top:434.09px;font-size:14.78px;line-height:14.78px;letter-spacing:0.729px;font-weight:normal;color:#111;left:430.00px;">12-100511</div>
<div class="t" style="top:434.09px;font-size:14.78px;line-height:14.78px;letter-spacing:0.729px;font-weight:normal;color:#111;left:802px;width:200.73px;text-align:right;">242,000</div>
<div class="t" style="top:434.09px;font-size:14.78px;line-height:14.78px;letter-spacing:0.729px;font-weight:normal;color:#111;left:1232.70px;">.</div>
<div class="t" style="top:434.09px;font-size:14.78px;line-height:14.78px;letter-spacing:0.479px;font-weight:normal;color:#111;left:1264.20px;width:196px;overflow:hidden;">Bancolombia 017-0814551-1</div>
<div style="position:absolute;left:35px;top:454px;width:206px;height:22px;background:#effbe1;"></div>
<div style="position:absolute;left:243px;top:454px;width:159px;height:22px;background:#effbe1;"></div>
<div class="btn" style="left:404px;top:454px;width:24px;height:22px;border-left:1px solid #fafafa;"><div class="dots"></div></div>
<div style="position:absolute;left:429px;top:454px;width:90px;height:22px;background:#effbe1;border-left:1px solid #707070;"></div>
<div class="btn" style="left:520px;top:454px;width:23px;height:22px;border-left:1px solid #fafafa;"><div class="dots"></div></div>
<div style="position:absolute;left:545px;top:454px;width:89px;height:22px;background:#effbe1;border-left:1px solid #707070;"></div>
<div class="btn" style="left:635px;top:454px;width:24px;height:22px;border-left:1px solid #fafafa;"><div class="dots"></div></div>
<div style="position:absolute;left:660px;top:454px;width:86px;height:22px;background:#effbe1;border-top:2px solid #b4b4b4;border-left:1px solid #707070;"></div>
<div style="position:absolute;left:725px;top:454px;width:21px;height:22px;background:#e1e1e1;border:1px solid #adadad;border-top:2px solid #adadad;"><svg style="position:absolute;left:3px;top:8px" width="13" height="8" viewBox="0 0 13 8"><path d="M1.5 1.5 L6.5 6.3 L11.5 1.5" fill="none" stroke="#555" stroke-width="1.4"/></svg></div>
<div style="position:absolute;left:748px;top:454px;width:118px;height:22px;background:#effbe1;"></div>
<div style="position:absolute;left:867px;top:454px;width:136px;height:22px;background:#effbe1;"></div>
<div style="position:absolute;left:1004px;top:454px;width:137px;height:22px;background:#effbe1;"></div>
<div style="position:absolute;left:1142px;top:454px;width:95px;height:22px;background:#effbe1;"></div>
<div class="btn" style="left:1238px;top:454px;width:24px;height:22px;border-left:1px solid #fafafa;"><div class="dots"></div></div>
<div style="position:absolute;left:1263px;top:454px;width:198px;height:22px;background:#effbe1;border-left:1px solid #707070;"></div>
<div style="position:absolute;left:1462px;top:454px;width:177px;height:22px;background:#effbe1;"></div>
<div style="position:absolute;left:1640px;top:454px;width:226px;height:22px;background:#effbe1;"></div>
<div class="t" style="top:456.54px;font-size:14.78px;line-height:14.78px;letter-spacing:0.479px;font-weight:normal;color:#111;left:36.90px;">NIIF</div>
<div class="t" style="top:457.84px;font-size:14.78px;line-height:14.78px;letter-spacing:0.729px;font-weight:normal;color:#111;left:243.60px;">11100555</div>
<div class="t" style="top:457.84px;font-size:14.78px;line-height:14.78px;letter-spacing:0.729px;font-weight:normal;color:#111;left:430.00px;">12-100511</div>
<div class="t" style="top:457.84px;font-size:14.78px;line-height:14.78px;letter-spacing:0.729px;font-weight:normal;color:#111;left:802px;width:200.73px;text-align:right;">133,000</div>
<div class="t" style="top:457.84px;font-size:14.78px;line-height:14.78px;letter-spacing:0.729px;font-weight:normal;color:#111;left:1232.70px;">.</div>
<div class="t" style="top:457.84px;font-size:14.78px;line-height:14.78px;letter-spacing:0.479px;font-weight:normal;color:#111;left:1264.20px;width:196px;overflow:hidden;">Bancolombia 017-0814551-1</div>
<div style="position:absolute;left:35px;top:478px;width:206px;height:22px;background:#fff;"></div>
<div style="position:absolute;left:243px;top:478px;width:159px;height:22px;background:#fff;"></div>
<div class="btn" style="left:404px;top:478px;width:24px;height:22px;border-left:1px solid #fafafa;"><div class="dots"></div></div>
<div style="position:absolute;left:429px;top:478px;width:90px;height:22px;background:#fff;border-left:1px solid #707070;"></div>
<div class="btn" style="left:520px;top:478px;width:23px;height:22px;border-left:1px solid #fafafa;"><div class="dots"></div></div>
<div style="position:absolute;left:545px;top:478px;width:89px;height:22px;background:#fff;border-left:1px solid #707070;"></div>
<div class="btn" style="left:635px;top:478px;width:24px;height:22px;border-left:1px solid #fafafa;"><div class="dots"></div></div>
<div style="position:absolute;left:660px;top:478px;width:86px;height:22px;background:#fff;border-top:2px solid #b4b4b4;border-left:1px solid #707070;"></div>
<div style="position:absolute;left:725px;top:478px;width:21px;height:22px;background:#e1e1e1;border:1px solid #adadad;border-top:2px solid #adadad;"><svg style="position:absolute;left:3px;top:8px" width="13" height="8" viewBox="0 0 13 8"><path d="M1.5 1.5 L6.5 6.3 L11.5 1.5" fill="none" stroke="#555" stroke-width="1.4"/></svg></div>
<div style="position:absolute;left:748px;top:478px;width:118px;height:22px;background:#fff;"></div>
<div style="position:absolute;left:867px;top:478px;width:136px;height:22px;background:#fff;"></div>
<div style="position:absolute;left:1004px;top:478px;width:137px;height:22px;background:#fff;"></div>
<div style="position:absolute;left:1142px;top:478px;width:95px;height:22px;background:#fff;"></div>
<div class="btn" style="left:1238px;top:478px;width:24px;height:22px;border-left:1px solid #fafafa;"><div class="dots"></div></div>
<div style="position:absolute;left:1263px;top:478px;width:198px;height:22px;background:#fff;border-left:1px solid #707070;"></div>
<div style="position:absolute;left:1462px;top:478px;width:177px;height:22px;background:#fff;"></div>
<div style="position:absolute;left:1640px;top:478px;width:226px;height:22px;background:#fff;"></div>
<div class="t" style="top:480.29px;font-size:14.78px;line-height:14.78px;letter-spacing:0.479px;font-weight:normal;color:#111;left:36.90px;">NIIF</div>
<div class="t" style="top:481.59px;font-size:14.78px;line-height:14.78px;letter-spacing:0.729px;font-weight:normal;color:#111;left:243.60px;">11100555</div>
<div class="t" style="top:481.59px;font-size:14.78px;line-height:14.78px;letter-spacing:0.729px;font-weight:normal;color:#111;left:430.00px;">12-100511</div>
<div class="t" style="top:481.59px;font-size:14.78px;line-height:14.78px;letter-spacing:0.729px;font-weight:normal;color:#111;left:802px;width:200.73px;text-align:right;">2,859,000</div>
<div class="t" style="top:481.59px;font-size:14.78px;line-height:14.78px;letter-spacing:0.729px;font-weight:normal;color:#111;left:1232.70px;">.</div>
<div class="t" style="top:481.59px;font-size:14.78px;line-height:14.78px;letter-spacing:0.479px;font-weight:normal;color:#111;left:1264.20px;width:196px;overflow:hidden;">Bancolombia 017-0814551-1</div>
<div style="position:absolute;left:35px;top:502px;width:206px;height:22px;background:#effbe1;"></div>
<div style="position:absolute;left:243px;top:502px;width:159px;height:22px;background:#effbe1;"></div>
<div class="btn" style="left:404px;top:502px;width:24px;height:22px;border-left:1px solid #fafafa;"><div class="dots"></div></div>
<div style="position:absolute;left:429px;top:502px;width:90px;height:22px;background:#effbe1;border-left:1px solid #707070;"></div>
<div class="btn" style="left:520px;top:502px;width:23px;height:22px;border-left:1px solid #fafafa;"><div class="dots"></div></div>
<div style="position:absolute;left:545px;top:502px;width:89px;height:22px;background:#effbe1;border-left:1px solid #707070;"></div>
<div class="btn" style="left:635px;top:502px;width:24px;height:22px;border-left:1px solid #fafafa;"><div class="dots"></div></div>
<div style="position:absolute;left:660px;top:502px;width:86px;height:22px;background:#effbe1;border-top:2px solid #b4b4b4;border-left:1px solid #707070;"></div>
<div style="position:absolute;left:725px;top:502px;width:21px;height:22px;background:#e1e1e1;border:1px solid #adadad;border-top:2px solid #adadad;"><svg style="position:absolute;left:3px;top:8px" width="13" height="8" viewBox="0 0 13 8"><path d="M1.5 1.5 L6.5 6.3 L11.5 1.5" fill="none" stroke="#555" stroke-width="1.4"/></svg></div>
<div style="position:absolute;left:748px;top:502px;width:118px;height:22px;background:#effbe1;"></div>
<div style="position:absolute;left:867px;top:502px;width:136px;height:22px;background:#effbe1;"></div>
<div style="position:absolute;left:1004px;top:502px;width:137px;height:22px;background:#effbe1;"></div>
<div style="position:absolute;left:1142px;top:502px;width:95px;height:22px;background:#effbe1;"></div>
<div class="btn" style="left:1238px;top:502px;width:24px;height:22px;border-left:1px solid #fafafa;"><div class="dots"></div></div>
<div style="position:absolute;left:1263px;top:502px;width:198px;height:22px;background:#effbe1;border-left:1px solid #707070;"></div>
<div style="position:absolute;left:1462px;top:502px;width:177px;height:22px;background:#effbe1;"></div>
<div style="position:absolute;left:1640px;top:502px;width:226px;height:22px;background:#effbe1;"></div>
<div class="t" style="top:504.04px;font-size:14.78px;line-height:14.78px;letter-spacing:0.479px;font-weight:normal;color:#111;left:36.90px;">NIIF</div>
<div class="t" style="top:505.34px;font-size:14.78px;line-height:14.78px;letter-spacing:0.729px;font-weight:normal;color:#111;left:243.60px;">11100555</div>
<div class="t" style="top:505.34px;font-size:14.78px;line-height:14.78px;letter-spacing:0.729px;font-weight:normal;color:#111;left:430.00px;">12-100511</div>
<div class="t" style="top:505.34px;font-size:14.78px;line-height:14.78px;letter-spacing:0.729px;font-weight:normal;color:#111;left:802px;width:200.73px;text-align:right;">109,000</div>
<div class="t" style="top:505.34px;font-size:14.78px;line-height:14.78px;letter-spacing:0.729px;font-weight:normal;color:#111;left:1232.70px;">.</div>
<div class="t" style="top:505.34px;font-size:14.78px;line-height:14.78px;letter-spacing:0.479px;font-weight:normal;color:#111;left:1264.20px;width:196px;overflow:hidden;">Bancolombia 017-0814551-1</div>
<div style="position:absolute;left:35px;top:526px;width:206px;height:21px;background:#fff;"></div>
<div style="position:absolute;left:243px;top:526px;width:159px;height:21px;background:#fff;"></div>
<div class="btn" style="left:404px;top:526px;width:24px;height:21px;border-left:1px solid #fafafa;"><div class="dots"></div></div>
<div style="position:absolute;left:429px;top:526px;width:90px;height:21px;background:#fff;border-left:1px solid #707070;"></div>
<div class="btn" style="left:520px;top:526px;width:23px;height:21px;border-left:1px solid #fafafa;"><div class="dots"></div></div>
<div style="position:absolute;left:545px;top:526px;width:89px;height:21px;background:#fff;border-left:1px solid #707070;"></div>
<div class="btn" style="left:635px;top:526px;width:24px;height:21px;border-left:1px solid #fafafa;"><div class="dots"></div></div>
<div style="position:absolute;left:660px;top:526px;width:86px;height:21px;background:#fff;border-top:2px solid #b4b4b4;border-left:1px solid #707070;"></div>
<div style="position:absolute;left:725px;top:526px;width:21px;height:21px;background:#e1e1e1;border:1px solid #adadad;border-top:2px solid #adadad;"><svg style="position:absolute;left:3px;top:8px" width="13" height="8" viewBox="0 0 13 8"><path d="M1.5 1.5 L6.5 6.3 L11.5 1.5" fill="none" stroke="#555" stroke-width="1.4"/></svg></div>
<div style="position:absolute;left:748px;top:526px;width:118px;height:21px;background:#fff;"></div>
<div style="position:absolute;left:867px;top:526px;width:136px;height:21px;background:#fff;"></div>
<div style="position:absolute;left:1004px;top:526px;width:137px;height:21px;background:#fff;"></div>
<div style="position:absolute;left:1142px;top:526px;width:95px;height:21px;background:#fff;"></div>
<div class="btn" style="left:1238px;top:526px;width:24px;height:21px;border-left:1px solid #fafafa;"><div class="dots"></div></div>
<div style="position:absolute;left:1263px;top:526px;width:198px;height:21px;background:#fff;border-left:1px solid #707070;"></div>
<div style="position:absolute;left:1462px;top:526px;width:177px;height:21px;background:#fff;"></div>
<div style="position:absolute;left:1640px;top:526px;width:226px;height:21px;background:#fff;"></div>
<div class="t" style="top:527.79px;font-size:14.78px;line-height:14.78px;letter-spacing:0.479px;font-weight:normal;color:#111;left:36.90px;">NIIF</div>
<div class="t" style="top:529.09px;font-size:14.78px;line-height:14.78px;letter-spacing:0.729px;font-weight:normal;color:#111;left:243.60px;">11100555</div>
<div class="t" style="top:529.09px;font-size:14.78px;line-height:14.78px;letter-spacing:0.729px;font-weight:normal;color:#111;left:430.00px;">12-100511</div>
<div class="t" style="top:529.09px;font-size:14.78px;line-height:14.78px;letter-spacing:0.729px;font-weight:normal;color:#111;left:802px;width:200.73px;text-align:right;">116,000</div>
<div class="t" style="top:529.09px;font-size:14.78px;line-height:14.78px;letter-spacing:0.729px;font-weight:normal;color:#111;left:1232.70px;">.</div>
<div class="t" style="top:529.09px;font-size:14.78px;line-height:14.78px;letter-spacing:0.479px;font-weight:normal;color:#111;left:1264.20px;width:196px;overflow:hidden;">Bancolombia 017-0814551-1</div>
<div style="position:absolute;left:35px;top:549px;width:206px;height:22px;background:#effbe1;"></div>
<div style="position:absolute;left:243px;top:549px;width:159px;height:22px;background:#effbe1;"></div>
<div class="btn" style="left:404px;top:549px;width:24px;height:22px;border-left:1px solid #fafafa;"><div class="dots"></div></div>
<div style="position:absolute;left:429px;top:549px;width:90px;height:22px;background:#effbe1;border-left:1px solid #707070;"></div>
<div class="btn" style="left:520px;top:549px;width:23px;height:22px;border-left:1px solid #fafafa;"><div class="dots"></div></div>
<div style="position:absolute;left:545px;top:549px;width:89px;height:22px;background:#effbe1;border-left:1px solid #707070;"></div>
<div class="btn" style="left:635px;top:549px;width:24px;height:22px;border-left:1px solid #fafafa;"><div class="dots"></div></div>
<div style="position:absolute;left:660px;top:549px;width:86px;height:22px;background:#effbe1;border-top:2px solid #b4b4b4;border-left:1px solid #707070;"></div>
<div style="position:absolute;left:725px;top:549px;width:21px;height:22px;background:#e1e1e1;border:1px solid #adadad;border-top:2px solid #adadad;"><svg style="position:absolute;left:3px;top:8px" width="13" height="8" viewBox="0 0 13 8"><path d="M1.5 1.5 L6.5 6.3 L11.5 1.5" fill="none" stroke="#555" stroke-width="1.4"/></svg></div>
<div style="position:absolute;left:748px;top:549px;width:118px;height:22px;background:#effbe1;"></div>
<div style="position:absolute;left:867px;top:549px;width:136px;height:22px;background:#effbe1;"></div>
<div style="position:absolute;left:1004px;top:549px;width:137px;height:22px;background:#effbe1;"></div>
<div style="position:absolute;left:1142px;top:549px;width:95px;height:22px;background:#effbe1;"></div>
<div class="btn" style="left:1238px;top:549px;width:24px;height:22px;border-left:1px solid #fafafa;"><div class="dots"></div></div>
<div style="position:absolute;left:1263px;top:549px;width:198px;height:22px;background:#effbe1;border-left:1px solid #707070;"></div>
<div style="position:absolute;left:1462px;top:549px;width:177px;height:22px;background:#effbe1;"></div>
<div style="position:absolute;left:1640px;top:549px;width:226px;height:22px;background:#effbe1;"></div>
<div class="t" style="top:551.54px;font-size:14.78px;line-height:14.78px;letter-spacing:0.479px;font-weight:normal;color:#111;left:36.90px;">NIIF</div>
<div class="t" style="top:552.84px;font-size:14.78px;line-height:14.78px;letter-spacing:0.729px;font-weight:normal;color:#111;left:243.60px;">11100555</div>
<div class="t" style="top:552.84px;font-size:14.78px;line-height:14.78px;letter-spacing:0.729px;font-weight:normal;color:#111;left:430.00px;">12-100511</div>
<div class="t" style="top:552.84px;font-size:14.78px;line-height:14.78px;letter-spacing:0.729px;font-weight:normal;color:#111;left:802px;width:200.73px;text-align:right;">116,000</div>
<div class="t" style="top:552.84px;font-size:14.78px;line-height:14.78px;letter-spacing:0.729px;font-weight:normal;color:#111;left:1232.70px;">.</div>
<div class="t" style="top:552.84px;font-size:14.78px;line-height:14.78px;letter-spacing:0.479px;font-weight:normal;color:#111;left:1264.20px;width:196px;overflow:hidden;">Bancolombia 017-0814551-1</div>
<div style="position:absolute;left:35px;top:573px;width:206px;height:22px;background:#fff;"></div>
<div style="position:absolute;left:243px;top:573px;width:159px;height:22px;background:#fff;"></div>
<div class="btn" style="left:404px;top:573px;width:24px;height:22px;border-left:1px solid #fafafa;"><div class="dots"></div></div>
<div style="position:absolute;left:429px;top:573px;width:90px;height:22px;background:#fff;border-left:1px solid #707070;"></div>
<div class="btn" style="left:520px;top:573px;width:23px;height:22px;border-left:1px solid #fafafa;"><div class="dots"></div></div>
<div style="position:absolute;left:545px;top:573px;width:89px;height:22px;background:#fff;border-left:1px solid #707070;"></div>
<div class="btn" style="left:635px;top:573px;width:24px;height:22px;border-left:1px solid #fafafa;"><div class="dots"></div></div>
<div style="position:absolute;left:660px;top:573px;width:86px;height:22px;background:#fff;border-top:2px solid #b4b4b4;border-left:1px solid #707070;"></div>
<div style="position:absolute;left:725px;top:573px;width:21px;height:22px;background:#e1e1e1;border:1px solid #adadad;border-top:2px solid #adadad;"><svg style="position:absolute;left:3px;top:8px" width="13" height="8" viewBox="0 0 13 8"><path d="M1.5 1.5 L6.5 6.3 L11.5 1.5" fill="none" stroke="#555" stroke-width="1.4"/></svg></div>
<div style="position:absolute;left:748px;top:573px;width:118px;height:22px;background:#fff;"></div>
<div style="position:absolute;left:867px;top:573px;width:136px;height:22px;background:#fff;"></div>
<div style="position:absolute;left:1004px;top:573px;width:137px;height:22px;background:#fff;"></div>
<div style="position:absolute;left:1142px;top:573px;width:95px;height:22px;background:#fff;"></div>
<div class="btn" style="left:1238px;top:573px;width:24px;height:22px;border-left:1px solid #fafafa;"><div class="dots"></div></div>
<div style="position:absolute;left:1263px;top:573px;width:198px;height:22px;background:#fff;border-left:1px solid #707070;"></div>
<div style="position:absolute;left:1462px;top:573px;width:177px;height:22px;background:#fff;"></div>
<div style="position:absolute;left:1640px;top:573px;width:226px;height:22px;background:#fff;"></div>
<div class="t" style="top:575.29px;font-size:14.78px;line-height:14.78px;letter-spacing:0.479px;font-weight:normal;color:#111;left:36.90px;">NIIF</div>
<div class="t" style="top:576.59px;font-size:14.78px;line-height:14.78px;letter-spacing:0.729px;font-weight:normal;color:#111;left:243.60px;">11100555</div>
<div class="t" style="top:576.59px;font-size:14.78px;line-height:14.78px;letter-spacing:0.729px;font-weight:normal;color:#111;left:430.00px;">12-100511</div>
<div class="t" style="top:576.59px;font-size:14.78px;line-height:14.78px;letter-spacing:0.729px;font-weight:normal;color:#111;left:802px;width:200.73px;text-align:right;">73,000</div>
<div class="t" style="top:576.59px;font-size:14.78px;line-height:14.78px;letter-spacing:0.729px;font-weight:normal;color:#111;left:1232.70px;">.</div>
<div class="t" style="top:576.59px;font-size:14.78px;line-height:14.78px;letter-spacing:0.479px;font-weight:normal;color:#111;left:1264.20px;width:196px;overflow:hidden;">Bancolombia 017-0814551-1</div>
<div style="position:absolute;left:35px;top:597px;width:206px;height:22px;background:#effbe1;"></div>
<div style="position:absolute;left:243px;top:597px;width:159px;height:22px;background:#effbe1;"></div>
<div class="btn" style="left:404px;top:597px;width:24px;height:22px;border-left:1px solid #fafafa;"><div class="dots"></div></div>
<div style="position:absolute;left:429px;top:597px;width:90px;height:22px;background:#effbe1;border-left:1px solid #707070;"></div>
<div class="btn" style="left:520px;top:597px;width:23px;height:22px;border-left:1px solid #fafafa;"><div class="dots"></div></div>
<div style="position:absolute;left:545px;top:597px;width:89px;height:22px;background:#effbe1;border-left:1px solid #707070;"></div>
<div class="btn" style="left:635px;top:597px;width:24px;height:22px;border-left:1px solid #fafafa;"><div class="dots"></div></div>
<div style="position:absolute;left:660px;top:597px;width:86px;height:22px;background:#effbe1;border-top:2px solid #b4b4b4;border-left:1px solid #707070;"></div>
<div style="position:absolute;left:725px;top:597px;width:21px;height:22px;background:#e1e1e1;border:1px solid #adadad;border-top:2px solid #adadad;"><svg style="position:absolute;left:3px;top:8px" width="13" height="8" viewBox="0 0 13 8"><path d="M1.5 1.5 L6.5 6.3 L11.5 1.5" fill="none" stroke="#555" stroke-width="1.4"/></svg></div>
<div style="position:absolute;left:748px;top:597px;width:118px;height:22px;background:#effbe1;"></div>
<div style="position:absolute;left:867px;top:597px;width:136px;height:22px;background:#effbe1;"></div>
<div style="position:absolute;left:1004px;top:597px;width:137px;height:22px;background:#effbe1;"></div>
<div style="position:absolute;left:1142px;top:597px;width:95px;height:22px;background:#effbe1;"></div>
<div class="btn" style="left:1238px;top:597px;width:24px;height:22px;border-left:1px solid #fafafa;"><div class="dots"></div></div>
<div style="position:absolute;left:1263px;top:597px;width:198px;height:22px;background:#effbe1;border-left:1px solid #707070;"></div>
<div style="position:absolute;left:1462px;top:597px;width:177px;height:22px;background:#effbe1;"></div>
<div style="position:absolute;left:1640px;top:597px;width:226px;height:22px;background:#effbe1;"></div>
<div class="t" style="top:599.04px;font-size:14.78px;line-height:14.78px;letter-spacing:0.479px;font-weight:normal;color:#111;left:36.90px;">NIIF</div>
<div class="t" style="top:600.34px;font-size:14.78px;line-height:14.78px;letter-spacing:0.729px;font-weight:normal;color:#111;left:243.60px;">11100555</div>
<div class="t" style="top:600.34px;font-size:14.78px;line-height:14.78px;letter-spacing:0.729px;font-weight:normal;color:#111;left:430.00px;">12-100511</div>
<div class="t" style="top:600.34px;font-size:14.78px;line-height:14.78px;letter-spacing:0.729px;font-weight:normal;color:#111;left:802px;width:200.73px;text-align:right;">150,000</div>
<div class="t" style="top:600.34px;font-size:14.78px;line-height:14.78px;letter-spacing:0.729px;font-weight:normal;color:#111;left:1232.70px;">.</div>
<div class="t" style="top:600.34px;font-size:14.78px;line-height:14.78px;letter-spacing:0.479px;font-weight:normal;color:#111;left:1264.20px;width:196px;overflow:hidden;">Bancolombia 017-0814551-1</div>
<div style="position:absolute;left:35px;top:621px;width:206px;height:21px;background:#fff;"></div>
<div style="position:absolute;left:243px;top:621px;width:159px;height:21px;background:#fff;"></div>
<div class="btn" style="left:404px;top:621px;width:24px;height:21px;border-left:1px solid #fafafa;"><div class="dots"></div></div>
<div style="position:absolute;left:429px;top:621px;width:90px;height:21px;background:#fff;border-left:1px solid #707070;"></div>
<div class="btn" style="left:520px;top:621px;width:23px;height:21px;border-left:1px solid #fafafa;"><div class="dots"></div></div>
<div style="position:absolute;left:545px;top:621px;width:89px;height:21px;background:#fff;border-left:1px solid #707070;"></div>
<div class="btn" style="left:635px;top:621px;width:24px;height:21px;border-left:1px solid #fafafa;"><div class="dots"></div></div>
<div style="position:absolute;left:660px;top:621px;width:86px;height:21px;background:#fff;border-top:2px solid #b4b4b4;border-left:1px solid #707070;"></div>
<div style="position:absolute;left:725px;top:621px;width:21px;height:21px;background:#e1e1e1;border:1px solid #adadad;border-top:2px solid #adadad;"><svg style="position:absolute;left:3px;top:8px" width="13" height="8" viewBox="0 0 13 8"><path d="M1.5 1.5 L6.5 6.3 L11.5 1.5" fill="none" stroke="#555" stroke-width="1.4"/></svg></div>
<div style="position:absolute;left:748px;top:621px;width:118px;height:21px;background:#fff;"></div>
<div style="position:absolute;left:867px;top:621px;width:136px;height:21px;background:#fff;"></div>
<div style="position:absolute;left:1004px;top:621px;width:137px;height:21px;background:#fff;"></div>
<div style="position:absolute;left:1142px;top:621px;width:95px;height:21px;background:#fff;"></div>
<div class="btn" style="left:1238px;top:621px;width:24px;height:21px;border-left:1px solid #fafafa;"><div class="dots"></div></div>
<div style="position:absolute;left:1263px;top:621px;width:198px;height:21px;background:#fff;border-left:1px solid #707070;"></div>
<div style="position:absolute;left:1462px;top:621px;width:177px;height:21px;background:#fff;"></div>
<div style="position:absolute;left:1640px;top:621px;width:226px;height:21px;background:#fff;"></div>
<div class="t" style="top:622.79px;font-size:14.78px;line-height:14.78px;letter-spacing:0.479px;font-weight:normal;color:#111;left:36.90px;">NIIF</div>
<div class="t" style="top:624.09px;font-size:14.78px;line-height:14.78px;letter-spacing:0.729px;font-weight:normal;color:#111;left:243.60px;">11100555</div>
<div class="t" style="top:624.09px;font-size:14.78px;line-height:14.78px;letter-spacing:0.729px;font-weight:normal;color:#111;left:430.00px;">12-100511</div>
<div class="t" style="top:624.09px;font-size:14.78px;line-height:14.78px;letter-spacing:0.729px;font-weight:normal;color:#111;left:802px;width:200.73px;text-align:right;">527,000</div>
<div class="t" style="top:624.09px;font-size:14.78px;line-height:14.78px;letter-spacing:0.729px;font-weight:normal;color:#111;left:1232.70px;">.</div>
<div class="t" style="top:624.09px;font-size:14.78px;line-height:14.78px;letter-spacing:0.479px;font-weight:normal;color:#111;left:1264.20px;width:196px;overflow:hidden;">Bancolombia 017-0814551-1</div>
<div style="position:absolute;left:35px;top:644px;width:206px;height:22px;background:#effbe1;"></div>
<div style="position:absolute;left:243px;top:644px;width:159px;height:22px;background:#effbe1;"></div>
<div class="btn" style="left:404px;top:644px;width:24px;height:22px;border-left:1px solid #fafafa;"><div class="dots"></div></div>
<div style="position:absolute;left:429px;top:644px;width:90px;height:22px;background:#effbe1;border-left:1px solid #707070;"></div>
<div class="btn" style="left:520px;top:644px;width:23px;height:22px;border-left:1px solid #fafafa;"><div class="dots"></div></div>
<div style="position:absolute;left:545px;top:644px;width:89px;height:22px;background:#effbe1;border-left:1px solid #707070;"></div>
<div class="btn" style="left:635px;top:644px;width:24px;height:22px;border-left:1px solid #fafafa;"><div class="dots"></div></div>
<div style="position:absolute;left:660px;top:644px;width:86px;height:22px;background:#effbe1;border-top:2px solid #b4b4b4;border-left:1px solid #707070;"></div>
<div style="position:absolute;left:725px;top:644px;width:21px;height:22px;background:#e1e1e1;border:1px solid #adadad;border-top:2px solid #adadad;"><svg style="position:absolute;left:3px;top:8px" width="13" height="8" viewBox="0 0 13 8"><path d="M1.5 1.5 L6.5 6.3 L11.5 1.5" fill="none" stroke="#555" stroke-width="1.4"/></svg></div>
<div style="position:absolute;left:748px;top:644px;width:118px;height:22px;background:#effbe1;"></div>
<div style="position:absolute;left:867px;top:644px;width:136px;height:22px;background:#effbe1;"></div>
<div style="position:absolute;left:1004px;top:644px;width:137px;height:22px;background:#effbe1;"></div>
<div style="position:absolute;left:1142px;top:644px;width:95px;height:22px;background:#effbe1;"></div>
<div class="btn" style="left:1238px;top:644px;width:24px;height:22px;border-left:1px solid #fafafa;"><div class="dots"></div></div>
<div style="position:absolute;left:1263px;top:644px;width:198px;height:22px;background:#effbe1;border-left:1px solid #707070;"></div>
<div style="position:absolute;left:1462px;top:644px;width:177px;height:22px;background:#effbe1;"></div>
<div style="position:absolute;left:1640px;top:644px;width:226px;height:22px;background:#effbe1;"></div>
<div class="t" style="top:646.54px;font-size:14.78px;line-height:14.78px;letter-spacing:0.479px;font-weight:normal;color:#111;left:36.90px;">NIIF</div>
<div class="t" style="top:647.84px;font-size:14.78px;line-height:14.78px;letter-spacing:0.729px;font-weight:normal;color:#111;left:243.60px;">11100555</div>
<div class="t" style="top:647.84px;font-size:14.78px;line-height:14.78px;letter-spacing:0.729px;font-weight:normal;color:#111;left:430.00px;">12-100511</div>
<div class="t" style="top:647.84px;font-size:14.78px;line-height:14.78px;letter-spacing:0.729px;font-weight:normal;color:#111;left:802px;width:200.73px;text-align:right;">71,000</div>
<div class="t" style="top:647.84px;font-size:14.78px;line-height:14.78px;letter-spacing:0.729px;font-weight:normal;color:#111;left:1232.70px;">.</div>
<div class="t" style="top:647.84px;font-size:14.78px;line-height:14.78px;letter-spacing:0.479px;font-weight:normal;color:#111;left:1264.20px;width:196px;overflow:hidden;">Bancolombia 017-0814551-1</div>
<div style="position:absolute;left:35px;top:668px;width:206px;height:22px;background:#fff;"></div>
<div style="position:absolute;left:243px;top:668px;width:159px;height:22px;background:#fff;"></div>
<div class="btn" style="left:404px;top:668px;width:24px;height:22px;border-left:1px solid #fafafa;"><div class="dots"></div></div>
<div style="position:absolute;left:429px;top:668px;width:90px;height:22px;background:#fff;border-left:1px solid #707070;"></div>
<div class="btn" style="left:520px;top:668px;width:23px;height:22px;border-left:1px solid #fafafa;"><div class="dots"></div></div>
<div style="position:absolute;left:545px;top:668px;width:89px;height:22px;background:#fff;border-left:1px solid #707070;"></div>
<div class="btn" style="left:635px;top:668px;width:24px;height:22px;border-left:1px solid #fafafa;"><div class="dots"></div></div>
<div style="position:absolute;left:660px;top:668px;width:86px;height:22px;background:#fff;border-top:2px solid #b4b4b4;border-left:1px solid #707070;"></div>
<div style="position:absolute;left:725px;top:668px;width:21px;height:22px;background:#e1e1e1;border:1px solid #adadad;border-top:2px solid #adadad;"><svg style="position:absolute;left:3px;top:8px" width="13" height="8" viewBox="0 0 13 8"><path d="M1.5 1.5 L6.5 6.3 L11.5 1.5" fill="none" stroke="#555" stroke-width="1.4"/></svg></div>
<div style="position:absolute;left:748px;top:668px;width:118px;height:22px;background:#fff;"></div>
<div style="position:absolute;left:867px;top:668px;width:136px;height:22px;background:#fff;"></div>
<div style="position:absolute;left:1004px;top:668px;width:137px;height:22px;background:#fff;"></div>
<div style="position:absolute;left:1142px;top:668px;width:95px;height:22px;background:#fff;"></div>
<div class="btn" style="left:1238px;top:668px;width:24px;height:22px;border-left:1px solid #fafafa;"><div class="dots"></div></div>
<div style="position:absolute;left:1263px;top:668px;width:198px;height:22px;background:#fff;border-left:1px solid #707070;"></div>
<div style="position:absolute;left:1462px;top:668px;width:177px;height:22px;background:#fff;"></div>
<div style="position:absolute;left:1640px;top:668px;width:226px;height:22px;background:#fff;"></div>
<div class="t" style="top:670.29px;font-size:14.78px;line-height:14.78px;letter-spacing:0.479px;font-weight:normal;color:#111;left:36.90px;">NIIF</div>
<div class="t" style="top:671.59px;font-size:14.78px;line-height:14.78px;letter-spacing:0.729px;font-weight:normal;color:#111;left:243.60px;">11100555</div>
<div class="t" style="top:671.59px;font-size:14.78px;line-height:14.78px;letter-spacing:0.729px;font-weight:normal;color:#111;left:430.00px;">12-100511</div>
<div class="t" style="top:671.59px;font-size:14.78px;line-height:14.78px;letter-spacing:0.729px;font-weight:normal;color:#111;left:802px;width:200.73px;text-align:right;">743,000</div>
<div class="t" style="top:671.59px;font-size:14.78px;line-height:14.78px;letter-spacing:0.729px;font-weight:normal;color:#111;left:1232.70px;">.</div>
<div class="t" style="top:671.59px;font-size:14.78px;line-height:14.78px;letter-spacing:0.479px;font-weight:normal;color:#111;left:1264.20px;width:196px;overflow:hidden;">Bancolombia 017-0814551-1</div>
<div style="position:absolute;left:35px;top:692px;width:206px;height:22px;background:#effbe1;"></div>
<div style="position:absolute;left:243px;top:692px;width:159px;height:22px;background:#effbe1;"></div>
<div class="btn" style="left:404px;top:692px;width:24px;height:22px;border-left:1px solid #fafafa;"><div class="dots"></div></div>
<div style="position:absolute;left:429px;top:692px;width:90px;height:22px;background:#effbe1;border-left:1px solid #707070;"></div>
<div class="btn" style="left:520px;top:692px;width:23px;height:22px;border-left:1px solid #fafafa;"><div class="dots"></div></div>
<div style="position:absolute;left:545px;top:692px;width:89px;height:22px;background:#effbe1;border-left:1px solid #707070;"></div>
<div class="btn" style="left:635px;top:692px;width:24px;height:22px;border-left:1px solid #fafafa;"><div class="dots"></div></div>
<div style="position:absolute;left:660px;top:692px;width:86px;height:22px;background:#effbe1;border-top:2px solid #b4b4b4;border-left:1px solid #707070;"></div>
<div style="position:absolute;left:725px;top:692px;width:21px;height:22px;background:#e1e1e1;border:1px solid #adadad;border-top:2px solid #adadad;"><svg style="position:absolute;left:3px;top:8px" width="13" height="8" viewBox="0 0 13 8"><path d="M1.5 1.5 L6.5 6.3 L11.5 1.5" fill="none" stroke="#555" stroke-width="1.4"/></svg></div>
<div style="position:absolute;left:748px;top:692px;width:118px;height:22px;background:#effbe1;"></div>
<div style="position:absolute;left:867px;top:692px;width:136px;height:22px;background:#effbe1;"></div>
<div style="position:absolute;left:1004px;top:692px;width:137px;height:22px;background:#effbe1;"></div>
<div style="position:absolute;left:1142px;top:692px;width:95px;height:22px;background:#effbe1;"></div>
<div class="btn" style="left:1238px;top:692px;width:24px;height:22px;border-left:1px solid #fafafa;"><div class="dots"></div></div>
<div style="position:absolute;left:1263px;top:692px;width:198px;height:22px;background:#effbe1;border-left:1px solid #707070;"></div>
<div style="position:absolute;left:1462px;top:692px;width:177px;height:22px;background:#effbe1;"></div>
<div style="position:absolute;left:1640px;top:692px;width:226px;height:22px;background:#effbe1;"></div>
<div class="t" style="top:694.04px;font-size:14.78px;line-height:14.78px;letter-spacing:0.479px;font-weight:normal;color:#111;left:36.90px;">NIIF</div>
<div class="t" style="top:695.34px;font-size:14.78px;line-height:14.78px;letter-spacing:0.729px;font-weight:normal;color:#111;left:243.60px;">11100555</div>
<div class="t" style="top:695.34px;font-size:14.78px;line-height:14.78px;letter-spacing:0.729px;font-weight:normal;color:#111;left:430.00px;">12-100511</div>
<div class="t" style="top:695.34px;font-size:14.78px;line-height:14.78px;letter-spacing:0.729px;font-weight:normal;color:#111;left:802px;width:200.73px;text-align:right;">219,000</div>
<div class="t" style="top:695.34px;font-size:14.78px;line-height:14.78px;letter-spacing:0.729px;font-weight:normal;color:#111;left:1232.70px;">.</div>
<div class="t" style="top:695.34px;font-size:14.78px;line-height:14.78px;letter-spacing:0.479px;font-weight:normal;color:#111;left:1264.20px;width:196px;overflow:hidden;">Bancolombia 017-0814551-1</div>
<div style="position:absolute;left:35px;top:716px;width:206px;height:21px;background:#fff;"></div>
<div style="position:absolute;left:243px;top:716px;width:159px;height:21px;background:#fff;"></div>
<div class="btn" style="left:404px;top:716px;width:24px;height:21px;border-left:1px solid #fafafa;"><div class="dots"></div></div>
<div style="position:absolute;left:429px;top:716px;width:90px;height:21px;background:#fff;border-left:1px solid #707070;"></div>
<div class="btn" style="left:520px;top:716px;width:23px;height:21px;border-left:1px solid #fafafa;"><div class="dots"></div></div>
<div style="position:absolute;left:545px;top:716px;width:89px;height:21px;background:#fff;border-left:1px solid #707070;"></div>
<div class="btn" style="left:635px;top:716px;width:24px;height:21px;border-left:1px solid #fafafa;"><div class="dots"></div></div>
<div style="position:absolute;left:660px;top:716px;width:86px;height:21px;background:#fff;border-top:2px solid #b4b4b4;border-left:1px solid #707070;"></div>
<div style="position:absolute;left:725px;top:716px;width:21px;height:21px;background:#e1e1e1;border:1px solid #adadad;border-top:2px solid #adadad;"><svg style="position:absolute;left:3px;top:8px" width="13" height="8" viewBox="0 0 13 8"><path d="M1.5 1.5 L6.5 6.3 L11.5 1.5" fill="none" stroke="#555" stroke-width="1.4"/></svg></div>
<div style="position:absolute;left:748px;top:716px;width:118px;height:21px;background:#fff;"></div>
<div style="position:absolute;left:867px;top:716px;width:136px;height:21px;background:#fff;"></div>
<div style="position:absolute;left:1004px;top:716px;width:137px;height:21px;background:#fff;"></div>
<div style="position:absolute;left:1142px;top:716px;width:95px;height:21px;background:#fff;"></div>
<div class="btn" style="left:1238px;top:716px;width:24px;height:21px;border-left:1px solid #fafafa;"><div class="dots"></div></div>
<div style="position:absolute;left:1263px;top:716px;width:198px;height:21px;background:#fff;border-left:1px solid #707070;"></div>
<div style="position:absolute;left:1462px;top:716px;width:177px;height:21px;background:#fff;"></div>
<div style="position:absolute;left:1640px;top:716px;width:226px;height:21px;background:#fff;"></div>
<div class="t" style="top:717.79px;font-size:14.78px;line-height:14.78px;letter-spacing:0.479px;font-weight:normal;color:#111;left:36.90px;">NIIF</div>
<div class="t" style="top:719.09px;font-size:14.78px;line-height:14.78px;letter-spacing:0.729px;font-weight:normal;color:#111;left:243.60px;">11100555</div>
<div class="t" style="top:719.09px;font-size:14.78px;line-height:14.78px;letter-spacing:0.729px;font-weight:normal;color:#111;left:430.00px;">12-100511</div>
<div class="t" style="top:719.09px;font-size:14.78px;line-height:14.78px;letter-spacing:0.729px;font-weight:normal;color:#111;left:802px;width:200.73px;text-align:right;">219,000</div>
<div class="t" style="top:719.09px;font-size:14.78px;line-height:14.78px;letter-spacing:0.729px;font-weight:normal;color:#111;left:1232.70px;">.</div>
<div class="t" style="top:719.09px;font-size:14.78px;line-height:14.78px;letter-spacing:0.479px;font-weight:normal;color:#111;left:1264.20px;width:196px;overflow:hidden;">Bancolombia 017-0814551-1</div>
<div style="position:absolute;left:35px;top:739px;width:206px;height:22px;background:#effbe1;"></div>
<div style="position:absolute;left:243px;top:739px;width:159px;height:22px;background:#effbe1;"></div>
<div class="btn" style="left:404px;top:739px;width:24px;height:22px;border-left:1px solid #fafafa;"><div class="dots"></div></div>
<div style="position:absolute;left:429px;top:739px;width:90px;height:22px;background:#effbe1;border-left:1px solid #707070;"></div>
<div class="btn" style="left:520px;top:739px;width:23px;height:22px;border-left:1px solid #fafafa;"><div class="dots"></div></div>
<div style="position:absolute;left:545px;top:739px;width:89px;height:22px;background:#effbe1;border-left:1px solid #707070;"></div>
<div class="btn" style="left:635px;top:739px;width:24px;height:22px;border-left:1px solid #fafafa;"><div class="dots"></div></div>
<div style="position:absolute;left:660px;top:739px;width:86px;height:22px;background:#effbe1;border-top:2px solid #b4b4b4;border-left:1px solid #707070;"></div>
<div style="position:absolute;left:725px;top:739px;width:21px;height:22px;background:#e1e1e1;border:1px solid #adadad;border-top:2px solid #adadad;"><svg style="position:absolute;left:3px;top:8px" width="13" height="8" viewBox="0 0 13 8"><path d="M1.5 1.5 L6.5 6.3 L11.5 1.5" fill="none" stroke="#555" stroke-width="1.4"/></svg></div>
<div style="position:absolute;left:748px;top:739px;width:118px;height:22px;background:#effbe1;"></div>
<div style="position:absolute;left:867px;top:739px;width:136px;height:22px;background:#effbe1;"></div>
<div style="position:absolute;left:1004px;top:739px;width:137px;height:22px;background:#effbe1;"></div>
<div style="position:absolute;left:1142px;top:739px;width:95px;height:22px;background:#effbe1;"></div>
<div class="btn" style="left:1238px;top:739px;width:24px;height:22px;border-left:1px solid #fafafa;"><div class="dots"></div></div>
<div style="position:absolute;left:1263px;top:739px;width:198px;height:22px;background:#effbe1;border-left:1px solid #707070;"></div>
<div style="position:absolute;left:1462px;top:739px;width:177px;height:22px;background:#effbe1;"></div>
<div style="position:absolute;left:1640px;top:739px;width:226px;height:22px;background:#effbe1;"></div>
<div class="t" style="top:741.54px;font-size:14.78px;line-height:14.78px;letter-spacing:0.479px;font-weight:normal;color:#111;left:36.90px;">NIIF</div>
<div class="t" style="top:742.84px;font-size:14.78px;line-height:14.78px;letter-spacing:0.729px;font-weight:normal;color:#111;left:243.60px;">11100555</div>
<div class="t" style="top:742.84px;font-size:14.78px;line-height:14.78px;letter-spacing:0.729px;font-weight:normal;color:#111;left:430.00px;">12-100511</div>
<div class="t" style="top:742.84px;font-size:14.78px;line-height:14.78px;letter-spacing:0.729px;font-weight:normal;color:#111;left:802px;width:200.73px;text-align:right;">214,000</div>
<div class="t" style="top:742.84px;font-size:14.78px;line-height:14.78px;letter-spacing:0.729px;font-weight:normal;color:#111;left:1232.70px;">.</div>
<div class="t" style="top:742.84px;font-size:14.78px;line-height:14.78px;letter-spacing:0.479px;font-weight:normal;color:#111;left:1264.20px;width:196px;overflow:hidden;">Bancolombia 017-0814551-1</div>
<div style="position:absolute;left:35px;top:763px;width:206px;height:22px;background:#fff;"></div>
<div style="position:absolute;left:243px;top:763px;width:159px;height:22px;background:#fff;"></div>
<div class="btn" style="left:404px;top:763px;width:24px;height:22px;border-left:1px solid #fafafa;"><div class="dots"></div></div>
<div style="position:absolute;left:429px;top:763px;width:90px;height:22px;background:#fff;border-left:1px solid #707070;"></div>
<div class="btn" style="left:520px;top:763px;width:23px;height:22px;border-left:1px solid #fafafa;"><div class="dots"></div></div>
<div style="position:absolute;left:545px;top:763px;width:89px;height:22px;background:#fff;border-left:1px solid #707070;"></div>
<div class="btn" style="left:635px;top:763px;width:24px;height:22px;border-left:1px solid #fafafa;"><div class="dots"></div></div>
<div style="position:absolute;left:660px;top:763px;width:86px;height:22px;background:#fff;border-top:2px solid #b4b4b4;border-left:1px solid #707070;"></div>
<div style="position:absolute;left:725px;top:763px;width:21px;height:22px;background:#e1e1e1;border:1px solid #adadad;border-top:2px solid #adadad;"><svg style="position:absolute;left:3px;top:8px" width="13" height="8" viewBox="0 0 13 8"><path d="M1.5 1.5 L6.5 6.3 L11.5 1.5" fill="none" stroke="#555" stroke-width="1.4"/></svg></div>
<div style="position:absolute;left:748px;top:763px;width:118px;height:22px;background:#fff;"></div>
<div style="position:absolute;left:867px;top:763px;width:136px;height:22px;background:#fff;"></div>
<div style="position:absolute;left:1004px;top:763px;width:137px;height:22px;background:#fff;"></div>
<div style="position:absolute;left:1142px;top:763px;width:95px;height:22px;background:#fff;"></div>
<div class="btn" style="left:1238px;top:763px;width:24px;height:22px;border-left:1px solid #fafafa;"><div class="dots"></div></div>
<div style="position:absolute;left:1263px;top:763px;width:198px;height:22px;background:#fff;border-left:1px solid #707070;"></div>
<div style="position:absolute;left:1462px;top:763px;width:177px;height:22px;background:#fff;"></div>
<div style="position:absolute;left:1640px;top:763px;width:226px;height:22px;background:#fff;"></div>
<div class="t" style="top:765.29px;font-size:14.78px;line-height:14.78px;letter-spacing:0.479px;font-weight:normal;color:#111;left:36.90px;">NIIF</div>
<div class="t" style="top:766.59px;font-size:14.78px;line-height:14.78px;letter-spacing:0.729px;font-weight:normal;color:#111;left:243.60px;">11100555</div>
<div class="t" style="top:766.59px;font-size:14.78px;line-height:14.78px;letter-spacing:0.729px;font-weight:normal;color:#111;left:430.00px;">12-100511</div>
<div class="t" style="top:766.59px;font-size:14.78px;line-height:14.78px;letter-spacing:0.729px;font-weight:normal;color:#111;left:802px;width:200.73px;text-align:right;">190,000</div>
<div class="t" style="top:766.59px;font-size:14.78px;line-height:14.78px;letter-spacing:0.729px;font-weight:normal;color:#111;left:1232.70px;">.</div>
<div class="t" style="top:766.59px;font-size:14.78px;line-height:14.78px;letter-spacing:0.479px;font-weight:normal;color:#111;left:1264.20px;width:196px;overflow:hidden;">Bancolombia 017-0814551-1</div>
<div style="position:absolute;left:35px;top:785px;width:1831px;height:2px;background:#f0f0f0;"></div>
<div style="position:absolute;left:1866px;top:171px;width:24px;height:657px;background:#f0f0f0;"></div>
<div style="position:absolute;left:1868px;top:191.5px;width:18px;height:148px;background:#cdcdcd;"></div>
<svg style="position:absolute;left:1866px;top:171px" width="24" height="22" viewBox="0 0 24 22">
<path d="M6.5 13.5 L10.8 9 L15 13.5" fill="none" stroke="#606060" stroke-width="2.2"/></svg>
<svg style="position:absolute;left:1866px;top:805px" width="24" height="22" viewBox="0 0 24 22">
<path d="M6.5 8.5 L10.8 13 L15 8.5" fill="none" stroke="#606060" stroke-width="2.2"/></svg>
<div style="position:absolute;left:1866px;top:826px;width:21px;height:2px;background:#d0d0d0;"></div>
<div style="position:absolute;left:241px;top:804px;width:163px;height:18.5px;background:#a5c34b;border-top:2px solid #727272;border-left:1.5px solid #727272;"></div>
<div style="position:absolute;left:404px;top:804px;width:25px;height:18.5px;background:#a5c34b;border-top:2px solid #727272;border-left:1.5px solid #727272;"></div>
<div style="position:absolute;left:429px;top:804px;width:91px;height:18.5px;background:#a5c34b;border-top:2px solid #727272;border-left:1.5px solid #727272;"></div>
<div style="position:absolute;left:520px;top:804px;width:24px;height:18.5px;background:#a5c34b;border-top:2px solid #727272;border-left:1.5px solid #727272;"></div>
<div style="position:absolute;left:544px;top:804px;width:91px;height:18.5px;background:#a5c34b;border-top:2px solid #727272;border-left:1.5px solid #727272;"></div>
<div style="position:absolute;left:635px;top:804px;width:25px;height:18.5px;background:#a5c34b;border-top:2px solid #727272;border-left:1.5px solid #727272;"></div>
<div style="position:absolute;left:660px;top:804px;width:87px;height:18.5px;background:#a5c34b;border-top:2px solid #727272;border-left:1.5px solid #727272;"></div>
<div style="position:absolute;left:747px;top:804px;width:119px;height:18.5px;background:#a5c34b;border-top:2px solid #b4b4b4;border-left:1.5px solid #b4b4b4;"></div>
<div style="position:absolute;left:866px;top:804px;width:138px;height:18.5px;background:#a5c34b;border-top:2px solid #b4b4b4;border-left:1.5px solid #b4b4b4;"></div>
<div style="position:absolute;left:1004px;top:804px;width:137px;height:18.5px;background:#a5c34b;border-top:2px solid #b4b4b4;border-left:1.5px solid #b4b4b4;"></div>
<div style="position:absolute;left:1141px;top:804px;width:96px;height:18.5px;background:#a5c34b;border-top:2px solid #727272;border-left:1.5px solid #727272;"></div>
<div style="position:absolute;left:1237px;top:804px;width:25px;height:18.5px;background:#a5c34b;border-top:2px solid #727272;border-left:1.5px solid #727272;"></div>
<div style="position:absolute;left:1262px;top:804px;width:199px;height:18.5px;background:#a5c34b;border-top:2px solid #727272;border-left:1.5px solid #727272;"></div>
<div style="position:absolute;left:1461px;top:804px;width:178px;height:18.5px;background:#a5c34b;border-top:2px solid #727272;border-left:1.5px solid #727272;"></div>
<div style="position:absolute;left:1639px;top:804px;width:227px;height:18.5px;background:#a5c34b;border-top:2px solid #727272;border-left:1.5px solid #727272;"></div>
<div class="t" style="left:694.02px;top:807.35px;font-size:15.65px;line-height:15.65px;transform:scaleX(0.8647);transform-origin:0 0;font-weight:normal;color:#000;">Dif:</div>
<div class="t" style="left:931.15px;top:807.35px;font-size:15.65px;line-height:15.65px;transform:scaleX(0.8739);transform-origin:0 0;font-weight:normal;color:#000;">50,330,000</div>
<div class="t" style="left:1068.05px;top:807.35px;font-size:15.65px;line-height:15.65px;transform:scaleX(0.8752);transform-origin:0 0;font-weight:normal;color:#000;">50,330,000</div>
<div style="position:absolute;left:35px;top:826px;width:6px;height:2px;background:#777;"></div>
<div style="position:absolute;left:62px;top:827px;width:1804px;height:1px;background:#e0e0e0;"></div>
</body></html>
